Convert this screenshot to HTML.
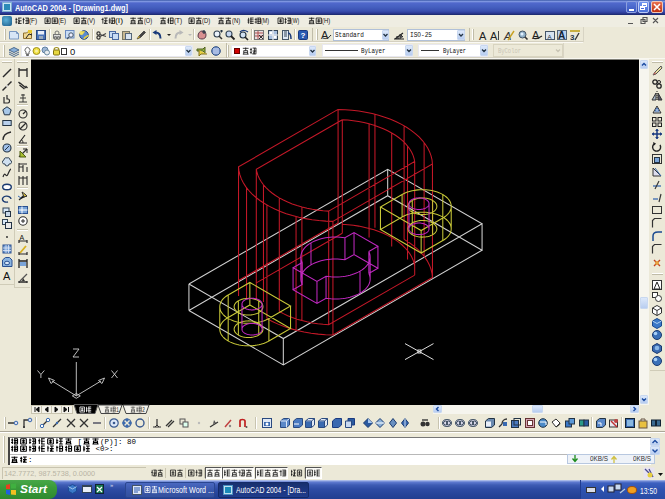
<!DOCTYPE html><html><head><meta charset="utf-8"><style>
*{margin:0;padding:0;box-sizing:border-box}
body{width:665px;height:499px;overflow:hidden;position:relative;background:#ece9d8;font-family:"Liberation Sans",sans-serif}
div{position:absolute}
.t{white-space:nowrap;line-height:1}
.cj svg{position:absolute;left:0;top:0}
svg{position:absolute;overflow:visible}
.grip{width:2px;border-left:1px solid #fff;border-right:1px solid #c0bca8}
.gripv{height:2px;border-top:1px solid #fff;border-bottom:1px solid #c0bca8}
.sep{width:2px;border-left:1px solid #c8c4b0;border-right:1px solid #fff}
.sepv{height:2px;border-top:1px solid #c8c4b0;border-bottom:1px solid #fff}
.dd{background:#fff;border:1px solid #b0c0d8}
.ddb{background:linear-gradient(#dce8fa,#b8cdf0);border:1px solid #c8d8f0;border-radius:1px}
</style></head><body>

<div style="left:0;top:0;width:665px;height:15px;background:linear-gradient(#3b5aa8 0,#7d95e0 1.5px,#5068cc 3px,#4560c0 7px,#3a4fb0 11px,#2c3a98 13px,#1a2868 15px)"></div>
<div style="left:2px;top:2px;width:10px;height:10px;background:#c8e4f4;border:1px solid #80b0d0"></div>
<div style="left:4px;top:4px;width:6px;height:6px;background:#2a8ab8"></div>
<div class="t" style="left:14.50px;top:3.70px;font-size:8.70px;color:#fff;font-family:'Liberation Sans',sans-serif;font-weight:bold;transform:scaleX(0.851);transform-origin:0 0;">AutoCAD&nbsp;2004&nbsp;-&nbsp;[Drawing1.dwg]</div>
<div style="left:626px;top:1px;width:11px;height:12px;background:linear-gradient(#5a78d8,#3a58c0);border:1px solid #8ca0e0;border-radius:2px"></div>
<div style="left:629px;top:9px;width:5px;height:2px;background:#fff"></div>
<div style="left:638px;top:1px;width:11px;height:12px;background:linear-gradient(#7094f0,#4a70d8);border:1px solid #b8c8f4;border-radius:2px"></div>
<div style="left:642px;top:3px;width:5px;height:4px;border:1px solid #fff;border-top-width:2px"></div>
<div style="left:640px;top:6px;width:5px;height:4px;border:1px solid #fff;border-top-width:2px;background:#4a68d8"></div>
<div style="left:651px;top:1px;width:12px;height:12px;background:linear-gradient(#e87050,#c03010);border:1px solid #f0c8b8;border-radius:2px"></div>
<svg style="left:651px;top:1px" width="12" height="12"><path d="M3 3L9 9M9 3L3 9" stroke="#fff" stroke-width="1.6"/></svg>
<div style="left:0;top:15px;width:665px;height:12px;background:#efede2"></div>
<div style="left:2px;top:16px;width:10px;height:10px;background:radial-gradient(circle at 40% 40%,#5ab0d8,#1a5a88);border-radius:2px"></div>
<svg style="left:0;top:0" width="665" height="499"><path d="M16.24 17.82V23.68M15.50 19.45H17.48M15.50 22.05H17.36M18.10 18.02H21.58M18.10 20.75H21.58M18.10 23.48H21.58M18.91 18.02V23.68M18.29 23.68L19.84 21.07M23.44 17.82V23.68M22.70 19.45H24.68M25.30 18.02H28.78M25.30 20.75H28.78M25.30 23.48H28.78M27.04 18.02V23.68M28.59 18.02V23.35" stroke="#111" stroke-width="0.8" fill="none" stroke-opacity="1.0"/></svg><div class="t" style="left:29.40px;top:16.72px;font-size:8.05px;color:#111;font-family:'Liberation Sans',sans-serif;transform:scaleX(0.788);transform-origin:0 0;opacity:1.0">(F)</div>
<svg style="left:0;top:0" width="665" height="499"><path d="M45.00 18.02H50.20M45.00 18.02V23.68M50.20 18.02V23.68M45.00 23.48H50.20M46.05 20.10H49.15M46.05 21.73H49.15M47.60 18.80V22.70M52.20 18.02H57.40M52.20 18.02V23.68M57.40 18.02V23.68M52.20 23.48H57.40M53.25 20.10H56.35M53.25 21.73H56.35M54.80 18.80V22.70" stroke="#111" stroke-width="0.8" fill="none" stroke-opacity="1.0"/></svg><div class="t" style="left:58.40px;top:16.72px;font-size:8.05px;color:#111;font-family:'Liberation Sans',sans-serif;transform:scaleX(0.755);transform-origin:0 0;opacity:1.0">(E)</div>
<svg style="left:0;top:0" width="665" height="499"><path d="M74.00 18.02H79.20M74.00 18.02V23.68M79.20 18.02V23.68M74.00 23.48H79.20M75.05 20.10H78.15M75.05 21.73H78.15M76.60 18.80V22.70M81.01 18.28H86.59M83.80 17.50V20.43M81.63 20.43H85.97M81.94 20.75V23.68M85.66 20.75V23.68M81.94 22.05H85.66M81.01 23.68H86.59" stroke="#111" stroke-width="0.8" fill="none" stroke-opacity="1.0"/></svg><div class="t" style="left:87.40px;top:16.72px;font-size:8.05px;color:#111;font-family:'Liberation Sans',sans-serif;transform:scaleX(0.755);transform-origin:0 0;opacity:1.0">(V)</div>
<svg style="left:0;top:0" width="665" height="499"><path d="M102.86 17.82V23.68M101.50 19.45H103.48M104.10 18.02H107.58M104.10 20.75H107.58M104.10 23.48H107.58M105.84 18.02V23.68M104.29 23.68L105.84 21.07M109.82 17.82V23.68M108.70 20.10H110.68M108.70 22.05H110.56M111.30 18.02H114.78M111.30 20.75H114.78M111.30 23.48H114.78M112.11 18.02V23.68M114.59 18.02V23.35M111.49 23.68L113.04 21.07" stroke="#111" stroke-width="0.8" fill="none" stroke-opacity="1.0"/></svg><div class="t" style="left:115.40px;top:16.72px;font-size:8.05px;color:#111;font-family:'Liberation Sans',sans-serif;transform:scaleX(1.066);transform-origin:0 0;opacity:1.0">(I)</div>
<svg style="left:0;top:0" width="665" height="499"><path d="M130.31 18.28H135.89M133.10 17.50V20.43M130.93 20.43H135.27M131.24 20.75V23.68M134.96 20.75V23.68M131.24 22.05H134.96M130.31 23.68H135.89M137.51 18.28H143.09M140.30 17.50V20.43M138.13 20.43H142.47M138.44 20.75V23.68M142.16 20.75V23.68M138.44 22.05H142.16M137.51 23.68H143.09" stroke="#111" stroke-width="0.8" fill="none" stroke-opacity="1.0"/></svg><div class="t" style="left:143.90px;top:16.72px;font-size:8.05px;color:#111;font-family:'Liberation Sans',sans-serif;transform:scaleX(0.697);transform-origin:0 0;opacity:1.0">(O)</div>
<svg style="left:0;top:0" width="665" height="499"><path d="M160.31 18.28H165.89M163.10 17.50V20.43M160.93 20.43H165.27M161.24 20.75V23.68M164.96 20.75V23.68M161.24 22.05H164.96M160.31 23.68H165.89M168.56 17.82V23.68M167.20 20.10H169.18M167.20 22.05H169.06M169.80 18.02H173.28M169.80 20.75H173.28M169.80 23.48H173.28M170.61 18.02V23.68M173.09 18.02V23.35" stroke="#111" stroke-width="0.8" fill="none" stroke-opacity="1.0"/></svg><div class="t" style="left:173.90px;top:16.72px;font-size:8.05px;color:#111;font-family:'Liberation Sans',sans-serif;transform:scaleX(0.788);transform-origin:0 0;opacity:1.0">(T)</div>
<svg style="left:0;top:0" width="665" height="499"><path d="M189.00 18.02H194.20M189.00 18.02V23.68M194.20 18.02V23.68M189.00 23.48H194.20M190.05 20.10H193.15M190.05 21.73H193.15M191.60 18.80V22.70M196.01 18.28H201.59M198.80 17.50V20.43M196.63 20.43H200.97M196.94 20.75V23.68M200.66 20.75V23.68M196.94 22.05H200.66M196.01 23.68H201.59" stroke="#111" stroke-width="0.8" fill="none" stroke-opacity="1.0"/></svg><div class="t" style="left:202.40px;top:16.72px;font-size:8.05px;color:#111;font-family:'Liberation Sans',sans-serif;transform:scaleX(0.725);transform-origin:0 0;opacity:1.0">(D)</div>
<svg style="left:0;top:0" width="665" height="499"><path d="M218.31 18.28H223.89M221.10 17.50V20.43M218.93 20.43H223.27M219.24 20.75V23.68M222.96 20.75V23.68M219.24 22.05H222.96M218.31 23.68H223.89M225.51 18.28H231.09M228.30 17.50V20.43M226.13 20.43H230.47M226.44 20.75V23.68M230.16 20.75V23.68M226.44 22.05H230.16M225.51 23.68H231.09" stroke="#111" stroke-width="0.8" fill="none" stroke-opacity="1.0"/></svg><div class="t" style="left:231.90px;top:16.72px;font-size:8.05px;color:#111;font-family:'Liberation Sans',sans-serif;transform:scaleX(0.725);transform-origin:0 0;opacity:1.0">(N)</div>
<svg style="left:0;top:0" width="665" height="499"><path d="M248.62 17.82V23.68M247.50 20.10H249.48M247.50 22.05H249.36M250.10 18.02H253.58M250.10 19.84H253.58M250.10 21.66H253.58M250.10 23.48H253.58M250.91 18.02V23.68M256.06 17.82V23.68M254.70 19.45H256.68M254.70 22.05H256.56M257.30 18.02H260.78M257.30 19.84H260.78M257.30 21.66H260.78M257.30 23.48H260.78M258.11 18.02V23.68M260.59 18.02V23.35" stroke="#111" stroke-width="0.8" fill="none" stroke-opacity="1.0"/></svg><div class="t" style="left:261.40px;top:16.72px;font-size:8.05px;color:#111;font-family:'Liberation Sans',sans-serif;transform:scaleX(0.671);transform-origin:0 0;opacity:1.0">(M)</div>
<svg style="left:0;top:0" width="665" height="499"><path d="M278.00 18.02H283.20M278.00 18.02V23.68M283.20 18.02V23.68M278.00 23.48H283.20M279.05 20.10H282.15M279.05 21.73H282.15M280.60 18.80V22.70M285.44 17.82V23.68M284.70 19.45H286.68M284.70 22.05H286.56M287.30 18.02H290.78M287.30 20.75H290.78M287.30 23.48H290.78M289.04 18.02V23.68M290.59 18.02V23.35" stroke="#111" stroke-width="0.8" fill="none" stroke-opacity="1.0"/></svg><div class="t" style="left:291.40px;top:16.72px;font-size:8.05px;color:#111;font-family:'Liberation Sans',sans-serif;transform:scaleX(0.625);transform-origin:0 0;opacity:1.0">(W)</div>
<svg style="left:0;top:0" width="665" height="499"><path d="M308.81 18.28H314.39M311.60 17.50V20.43M309.43 20.43H313.77M309.74 20.75V23.68M313.46 20.75V23.68M309.74 22.05H313.46M308.81 23.68H314.39M316.20 18.02H321.40M316.20 18.02V23.68M321.40 18.02V23.68M316.20 23.48H321.40M317.25 20.10H320.35M317.25 21.73H320.35M318.80 18.80V22.70" stroke="#111" stroke-width="0.8" fill="none" stroke-opacity="1.0"/></svg><div class="t" style="left:322.40px;top:16.72px;font-size:8.05px;color:#111;font-family:'Liberation Sans',sans-serif;transform:scaleX(0.725);transform-origin:0 0;opacity:1.0">(H)</div>
<svg style="left:0;top:15px" width="665" height="12"><path d="M628 8.5h5M643 2.5h4v4h-4zM641 4.5h4v4h-4zM653 3l5 5M658 3l-5 5" stroke="#555" stroke-width="1.1" fill="#efede2"/></svg>
<div style="left:0;top:27px;width:665px;height:32px;background:#ece9d8"></div>
<div style="left:0;top:41px;width:583px;height:1px;background:#d4d0c0"></div>
<div style="left:0;top:42px;width:583px;height:1px;background:#faf9f4"></div>
<div style="left:0;top:57px;width:563px;height:1px;background:#d4d0c0"></div>
<div style="left:0;top:58px;width:665px;height:1px;background:#f8f7f0"></div>
<div class="grip" style="left:4px;top:29px;height:11px"></div>
<svg style="left:9px;top:30px" width="10" height="10" viewBox="0 0 10 10"><path d="M0.5 1.5h7l2 2v5.5h-9z" fill="#d8e6f6" stroke="#7a98c0"/><path d="M7.5 1.5v2h2" fill="none" stroke="#7a98c0"/></svg>
<svg style="left:23px;top:30px" width="10" height="10" viewBox="0 0 10 10"><path d="M0.5 3h3l1-1h4v6.5h-8z" fill="#f0d890" stroke="#907030"/><path d="M3 8l3-4 3 1" stroke="#222" fill="none"/><rect x="5" y="0" width="4" height="3" fill="#e8c830"/></svg>
<svg style="left:36px;top:30px" width="10" height="10" viewBox="0 0 10 10"><rect x="0.5" y="0.5" width="9" height="9" fill="#4a74b8" stroke="#2a4a80"/><rect x="2" y="1" width="6" height="3.5" fill="#e8eef8"/><rect x="3" y="6" width="4" height="3" fill="#9ab"/></svg>
<svg style="left:52px;top:30px" width="10" height="10" viewBox="0 0 10 10"><circle cx="5" cy="3" r="2" fill="none" stroke="#777"/><rect x="1.5" y="4.5" width="7" height="3.5" fill="#ddd" stroke="#777"/><circle cx="3.5" cy="8" r="1.5" fill="none" stroke="#666"/><circle cx="6.5" cy="8" r="1.5" fill="none" stroke="#666"/></svg>
<svg style="left:65px;top:30px" width="10" height="10" viewBox="0 0 10 10"><rect x="0.5" y="0.5" width="8.5" height="7.5" fill="#c8dcf4" stroke="#6a8ac0"/><circle cx="6" cy="5" r="2.2" fill="#eef" stroke="#456"/><path d="M2 9l2-2" stroke="#456" stroke-width="1.3"/></svg>
<svg style="left:79px;top:30px" width="10" height="10" viewBox="0 0 10 10"><circle cx="5" cy="5" r="4.3" fill="#5a8ad0" stroke="#2a4a80"/><path d="M1 4c2-2 4 0 4-3M5 9c1-3 4-2 4-4" stroke="#e8d040" stroke-width="1.6" fill="none"/><circle cx="2.5" cy="3" r="2" fill="#f0e060"/></svg>
<svg style="left:96px;top:30px" width="10" height="10" viewBox="0 0 10 10"><circle cx="2.5" cy="3.5" r="1.6" fill="none" stroke="#333" stroke-width="1.2"/><circle cx="2.5" cy="7.5" r="1.6" fill="none" stroke="#333" stroke-width="1.2"/><path d="M4 4.5l6 2M4 6.5l6-3" stroke="#444" stroke-width="1.1"/></svg>
<svg style="left:109px;top:30px" width="10" height="10" viewBox="0 0 10 10"><rect x="0.5" y="1.5" width="6" height="6" fill="#c8dcf4" stroke="#4a6aa0"/><rect x="3.5" y="3.5" width="6" height="6" fill="#c8dcf4" stroke="#4a6aa0"/></svg>
<svg style="left:122px;top:30px" width="10" height="10" viewBox="0 0 10 10"><rect x="0.5" y="1.5" width="7" height="8" fill="#c8b890" stroke="#776"/><rect x="3.5" y="3.5" width="6" height="6" fill="#d8e4f0" stroke="#567"/></svg>
<svg style="left:136px;top:30px" width="10" height="10" viewBox="0 0 10 10"><path d="M1 9l2-3 5-5 1.5 1.5-5 5z" fill="#444" stroke="#222" stroke-width="0.6"/><path d="M1 9l2-3 1 1z" fill="#e8c030"/></svg>
<svg style="left:152px;top:30px" width="10" height="10" viewBox="0 0 10 10"><path d="M8.5 8.5c0-4-2-6-5-6" stroke="#1a3a7a" stroke-width="2" fill="none"/><path d="M0.5 2.5l4-2.5v5z" fill="#1a3a7a"/></svg>
<svg style="left:164px;top:30px" width="10" height="10" viewBox="0 0 10 10"><path d="M3 4h4l-2 2z" fill="#222"/></svg>
<svg style="left:174px;top:30px" width="10" height="10" viewBox="0 0 10 10"><path d="M1.5 8.5c0-4 2-6 5-6" stroke="#b8b8b8" stroke-width="2" fill="none"/><path d="M9.5 2.5l-4-2.5v5z" fill="#b8b8b8"/></svg>
<svg style="left:185px;top:30px" width="10" height="10" viewBox="0 0 10 10"><path d="M3 4h4l-2 2z" fill="#bbb"/></svg>
<svg style="left:197px;top:30px" width="10" height="10" viewBox="0 0 10 10"><path d="M1 6c0-3 2-5 4-5s4 1 4 4-2 4-4 4-4-1-4-3z" fill="#d89090" stroke="#5a3a4a"/><path d="M7 0v4M5 2h4" stroke="#234" stroke-width="1.2"/></svg>
<svg style="left:213px;top:30px" width="10" height="10" viewBox="0 0 10 10"><circle cx="4" cy="4" r="3" fill="#eaf2fa" stroke="#345" stroke-width="1.1"/><path d="M6 6l3 3" stroke="#333" stroke-width="1.5"/><path d="M7 1h3M8.5 0v2.5" stroke="#234"/></svg>
<svg style="left:225px;top:30px" width="10" height="10" viewBox="0 0 10 10"><circle cx="4" cy="4" r="3" fill="#c8d8f0" stroke="#345" stroke-width="1.1"/><path d="M6 6l3.5 3.5" stroke="#222" stroke-width="1.8"/></svg>
<svg style="left:239px;top:30px" width="10" height="10" viewBox="0 0 10 10"><circle cx="4" cy="5" r="3" fill="#d0e0f0" stroke="#234" stroke-width="1.1"/><path d="M6 7l3 3" stroke="#222" stroke-width="1.6"/><path d="M1 2c2-2 5-2 8 0" stroke="#1a3a7a" stroke-width="1.3" fill="none"/></svg>
<svg style="left:254px;top:30px" width="10" height="10" viewBox="0 0 10 10"><rect x="0.5" y="0.5" width="9" height="9" fill="#e8e0e0" stroke="#777"/><path d="M1 3h8M1 6h8M4 1v8" stroke="#b05050"/><path d="M5 5l4 4M9 5l-4 4" stroke="#333"/></svg>
<svg style="left:268px;top:30px" width="10" height="10" viewBox="0 0 10 10"><rect x="0.5" y="0.5" width="9" height="9" fill="#a8c0e0" stroke="#345"/><path d="M5 0v10M0 5h10" stroke="#eee" stroke-width="1.2"/><rect x="1.5" y="1.5" width="2.5" height="2.5" fill="#fff"/><rect x="6" y="6" width="2.5" height="2.5" fill="#fff"/></svg>
<svg style="left:282px;top:30px" width="10" height="10" viewBox="0 0 10 10"><rect x="0.5" y="0.5" width="6" height="9" fill="#dde8f4" stroke="#456"/><path d="M2 2h3M2 4h3M2 6h3" stroke="#345"/><path d="M6 3c3 0 3 3 3 6" stroke="#1a3a7a" stroke-width="1.5" fill="none"/></svg>
<svg style="left:298px;top:30px" width="10" height="10" viewBox="0 0 10 10"><rect x="0.5" y="0.5" width="9" height="9" rx="1" fill="#2a5ab0" stroke="#1a3a80"/><text x="5" y="8.3" font-size="8" font-weight="bold" text-anchor="middle" fill="#fff" font-family="Liberation Sans">?</text></svg>
<div class="sep" style="left:48.5px;top:29px;height:11px"></div>
<div class="sep" style="left:92px;top:29px;height:11px"></div>
<div class="sep" style="left:148.5px;top:29px;height:11px"></div>
<div class="sep" style="left:192.5px;top:29px;height:11px"></div>
<div class="sep" style="left:251px;top:29px;height:11px"></div>
<div class="sep" style="left:294px;top:29px;height:11px"></div>
<div style="left:312px;top:28px;width:1px;height:13px;background:#c0bca8"></div>
<div class="grip" style="left:316px;top:29px;height:11px"></div>
<svg style="left:321px;top:30px" width="10" height="10" viewBox="0 0 10 10"><text x="0" y="9" font-size="11" font-family="Liberation Sans" fill="#222">A</text><path d="M2 8c2 1 5 1 8-3" stroke="#222" fill="none"/></svg>
<div class="dd" style="left:333px;top:29px;width:56px;height:12px"></div>
<div class="t" style="left:335.00px;top:31.30px;font-size:7.97px;color:#111;font-family:'Liberation Mono',monospace;transform:scaleX(0.758);transform-origin:0 0;">Standard</div>
<div class="ddb" style="left:382px;top:30px;width:7px;height:10px"></div>
<svg style="left:382px;top:30px" width="7" height="10"><path d="M1.5 4l2 2 2-2" stroke="#234" stroke-width="1.3" fill="none"/></svg>
<svg style="left:394px;top:30px" width="10" height="10" viewBox="0 0 10 10"><path d="M0 9h10M1 9l8-6" stroke="#222" stroke-width="1.2"/><path d="M3 9v-3l2 3M6 9v-5l3 3" stroke="#333" fill="#555"/></svg>
<div class="dd" style="left:407px;top:29px;width:58px;height:12px"></div>
<div class="t" style="left:409.50px;top:31.30px;font-size:7.97px;color:#111;font-family:'Liberation Mono',monospace;transform:scaleX(0.766);transform-origin:0 0;">ISO-25</div>
<div class="ddb" style="left:457px;top:30px;width:8px;height:10px"></div>
<svg style="left:457px;top:30px" width="8" height="10"><path d="M2 4l2 2 2-2" stroke="#234" stroke-width="1.3" fill="none"/></svg>
<div style="left:469px;top:28px;width:1px;height:13px;background:#c0bca8"></div>
<div class="grip" style="left:472px;top:29px;height:11px"></div>
<svg style="left:478px;top:30px" width="10" height="10" viewBox="0 0 10 10"><text x="1" y="9.5" font-size="11" font-family="Liberation Sans" fill="#222">A</text></svg>
<svg style="left:490px;top:30px" width="10" height="10" viewBox="0 0 10 10"><text x="0" y="9.5" font-size="11" font-family="Liberation Sans" fill="#222">A</text><path d="M8.5 1v9" stroke="#444"/></svg>
<svg style="left:504px;top:30px" width="10" height="10" viewBox="0 0 10 10"><text x="0" y="9.5" font-size="11" font-style="italic" font-family="Liberation Sans" fill="#333">A</text><path d="M4 10l6-9" stroke="#c8a020" stroke-width="1.4"/></svg>
<svg style="left:518px;top:30px" width="10" height="10" viewBox="0 0 10 10"><circle cx="4.5" cy="4.5" r="3.5" fill="#90b0c8" stroke="#456"/><circle cx="4" cy="4" r="1.5" fill="#e0f0ff"/><path d="M7 7l2.5 2.5" stroke="#333" stroke-width="1.6"/></svg>
<svg style="left:532px;top:30px" width="10" height="10" viewBox="0 0 10 10"><text x="0" y="9" font-size="11" font-family="Liberation Sans" fill="#222">A</text><path d="M1 8c3 2 6 0 9-2" stroke="#222" stroke-width="1.2" fill="none"/></svg>
<svg style="left:545px;top:30px" width="10" height="10" viewBox="0 0 10 10"><rect x="0.5" y="1.5" width="9" height="8" fill="#d8e4f0" stroke="#456"/><text x="2.5" y="8.5" font-size="6" font-family="Liberation Sans" fill="#234">A</text></svg>
<svg style="left:557px;top:30px" width="10" height="10" viewBox="0 0 10 10"><rect x="0.5" y="0.5" width="9" height="9" fill="#b8d0f0" stroke="#567"/><text x="1" y="9" font-size="10" font-weight="bold" font-family="Liberation Sans" fill="#123">A</text></svg>
<svg style="left:570px;top:30px" width="10" height="10" viewBox="0 0 10 10"><rect x="0" y="0" width="10" height="2" fill="#c8b040"/><text x="0" y="10" font-size="8" font-weight="bold" font-family="Liberation Sans" fill="#234">3</text><path d="M5 10l4-7" stroke="#333" stroke-width="1.3"/></svg>
<div style="left:583px;top:27px;width:1px;height:15px;background:#d8d4c4"></div>
<div class="grip" style="left:3px;top:45px;height:12px"></div>
<svg style="left:9px;top:46px" width="10" height="10" viewBox="0 0 10 10"><path d="M0 4l5-2.5 5 2.5-5 2.5z" fill="#8ab0d8" stroke="#4a6a90"/><path d="M0 6l5 2.5 5-2.5M0 8l5 2.5 5-2.5" fill="none" stroke="#4a6a90"/></svg>
<div class="dd" style="left:21px;top:45px;width:172px;height:12px;border-color:#e8e8f0"></div>
<svg style="left:23px;top:46px" width="55" height="10"><path d="M3 6a2.5 2.5 0 1 1 3 0v2h-3z" fill="#fff" stroke="#666"/><rect x="3.2" y="8" width="2.6" height="2" fill="#666"/><circle cx="13.5" cy="5" r="3.5" fill="#f0e040" stroke="#a09020"/><circle cx="13.5" cy="5" r="1.5" fill="#f8f0a0"/><circle cx="22" cy="4" r="3" fill="#a0b8d8" stroke="#6080a0"/><circle cx="24" cy="6.5" r="2.5" fill="#e8ecf0" stroke="#6a8aa0"/><path d="M31 4a2.5 2.5 0 0 1 5 0" fill="none" stroke="#a09020" stroke-width="1.2"/><rect x="30.5" y="4" width="6" height="5" rx="1" fill="#e8d840" stroke="#807010"/><rect x="38.5" y="2.5" width="5" height="6" fill="#fff" stroke="#333"/></svg>
<div class="t" style="left:70.00px;top:46.59px;font-size:9.42px;color:#111;font-family:'Liberation Sans',sans-serif;">0</div>
<div class="ddb" style="left:185px;top:46px;width:7px;height:10px"></div>
<svg style="left:185px;top:46px" width="7" height="10"><path d="M1.5 4l2 2 2-2" stroke="#234" stroke-width="1.3" fill="none"/></svg>
<svg style="left:197px;top:46px" width="10" height="10" viewBox="0 0 10 10"><path d="M0 3h6l2-2v6l-2-2h-6z" fill="#90b040" stroke="#506020"/><path d="M10 8h-6l-2 2v-6" fill="#e8d040" stroke="#807020"/></svg>
<svg style="left:211px;top:46px" width="10" height="10" viewBox="0 0 10 10"><circle cx="5" cy="5" r="4.3" fill="#7a9ad0" stroke="#2a4a80"/><path d="M2 3h6M2 5h6M2 7h6" stroke="#eef" stroke-width="0.8"/></svg>
<div style="left:226px;top:43px;width:1px;height:15px;background:#c0bca8"></div>
<div class="grip" style="left:227px;top:45px;height:12px"></div>
<div class="dd" style="left:231px;top:45px;width:85px;height:12px;border-color:#e8e8f0"></div>
<div style="left:234px;top:48px;width:6px;height:6px;background:#d00000;border:1px solid #600"></div>
<svg style="left:0;top:0" width="665" height="499"><path d="M242.82 48.34H248.58M245.70 47.50V50.65M243.46 50.65H247.94M243.78 51.00V54.15M247.62 51.00V54.15M243.78 52.40H247.62M242.82 54.15H248.58M251.05 47.85V54.15M249.90 49.60H251.95M249.90 52.40H251.82M252.59 48.06H256.17M252.59 51.00H256.17M252.59 53.94H256.17M254.38 48.06V54.15M255.98 48.06V53.80M252.78 54.15L254.38 51.35" stroke="#111" stroke-width="0.8" fill="none" stroke-opacity="1.0"/></svg>
<div class="ddb" style="left:309px;top:46px;width:7px;height:10px"></div>
<svg style="left:309px;top:46px" width="7" height="10"><path d="M1.5 4l2 2 2-2" stroke="#234" stroke-width="1.3" fill="none"/></svg>
<div class="dd" style="left:322px;top:44px;width:91px;height:13px;border-color:#e8e8f0"></div>
<div style="left:325px;top:50px;width:33px;height:1px;background:#333"></div>
<div class="t" style="left:360.50px;top:46.80px;font-size:7.97px;color:#111;font-family:'Liberation Mono',monospace;transform:scaleX(0.732);transform-origin:0 0;">ByLayer</div>
<div class="ddb" style="left:405px;top:45px;width:8px;height:11px"></div>
<svg style="left:405px;top:45px" width="8" height="11"><path d="M2 4.5l2 2 2-2" stroke="#234" stroke-width="1.3" fill="none"/></svg>
<div class="dd" style="left:418px;top:44px;width:70px;height:13px;border-color:#e8e8f0"></div>
<div style="left:421px;top:50px;width:18px;height:1px;background:#333"></div>
<div class="t" style="left:443.00px;top:46.80px;font-size:7.97px;color:#111;font-family:'Liberation Mono',monospace;transform:scaleX(0.687);transform-origin:0 0;">ByLayer</div>
<div class="ddb" style="left:480px;top:45px;width:8px;height:11px"></div>
<svg style="left:480px;top:45px" width="8" height="11"><path d="M2 4.5l2 2 2-2" stroke="#234" stroke-width="1.3" fill="none"/></svg>
<div style="left:493px;top:44px;width:70px;height:13px;border:1px solid #d8d4c0;background:#ece9d8"></div>
<div class="t" style="left:497.50px;top:46.80px;font-size:7.97px;color:#c8c4b4;font-family:'Liberation Mono',monospace;transform:scaleX(0.687);transform-origin:0 0;">ByColor</div>
<svg style="left:554px;top:45px" width="8" height="11"><path d="M2 4.5l2 2 2-2" stroke="#c8c4b4" stroke-width="1.3" fill="none"/></svg>
<div style="left:563px;top:43px;width:1px;height:15px;background:#d8d4c4"></div>
<div style="left:31px;top:59px;width:608px;height:1px;background:#808078"></div>
<div style="left:31px;top:60px;width:608px;height:345px;background:#000"></div>
<svg style="left:0;top:0" width="665" height="499" viewBox="0 0 665 499">
<path d="M188.93 284.02 L387.68 169.28 L482.07 223.78 L283.32 338.52 L188.93 284.02 M188.93 310.43 L387.68 195.68 L482.07 250.18 L283.32 364.93 L188.93 310.43 M188.93 284.02 L188.93 310.43 M387.68 169.28 L387.68 195.68 M482.07 223.78 L482.07 250.18 M283.32 338.52 L283.32 364.93" fill="none" stroke="#d0d0d0" stroke-opacity="1" stroke-width="1.05"/>
<path d="M338.07 109.42 L345.06 109.67 L352.01 110.21 L358.87 111.05 L365.61 112.16 L372.19 113.56 L378.57 115.22 L384.74 117.15 L390.64 119.33 L396.26 121.75 L401.56 124.40 L406.52 127.26 L411.11 130.32 L415.30 133.56 L419.07 136.97 L422.41 140.53 L425.29 144.22 L427.71 148.02 L429.64 151.91 L431.08 155.87 L432.02 159.88 L432.46 163.92 L332.93 221.38 M332.93 221.38 L325.94 221.13 L318.99 220.59 L312.13 219.75 L305.39 218.64 L298.81 217.24 L292.43 215.58 L286.26 213.65 L280.36 211.47 L274.74 209.05 L269.44 206.40 L264.48 203.54 L259.89 200.48 L255.70 197.24 L251.93 193.83 L248.59 190.27 L245.71 186.58 L243.29 182.78 L241.36 178.89 L239.92 174.93 L238.98 170.92 L238.54 166.88 L338.07 109.42 M342.30 119.68 L347.82 120.06 L353.28 120.67 L358.65 121.50 L363.91 122.54 L369.03 123.79 L373.99 125.25 L378.76 126.90 L383.31 128.74 L387.64 130.76 L391.70 132.95 L395.50 135.30 L398.99 137.79 L402.18 140.43 L405.04 143.18 L407.56 146.04 L409.73 149.00 L411.54 152.03 L412.97 155.14 L414.02 158.29 L414.69 161.48 L328.70 211.12 M328.70 211.12 L323.18 210.74 L317.72 210.13 L312.35 209.30 L307.09 208.26 L301.97 207.01 L297.01 205.55 L292.24 203.90 L287.69 202.06 L283.36 200.04 L279.30 197.85 L275.50 195.50 L272.01 193.01 L268.82 190.37 L265.96 187.62 L263.44 184.76 L261.27 181.80 L259.46 178.77 L258.03 175.66 L256.98 172.51 L256.31 169.32 L342.30 119.68 M404.09 239.40 L409.09 242.52 L413.67 245.84 L417.80 249.36 L421.45 253.05 L424.61 256.89 L427.26 260.85 L429.38 264.92 L430.96 269.07 L431.99 273.28 L432.46 277.52 L332.93 334.98 L325.59 334.71 L318.30 334.12 L311.11 333.20 L304.06 331.98 L297.20 330.45 L290.55 328.63 L284.16 326.52 L278.07 324.13 L272.31 321.49 L266.91 318.60 M238.54 280.48 L338.07 223.02 M414.69 275.08 L328.70 324.72 L323.18 324.34 L317.72 323.73 L312.35 322.90 L307.09 321.86 L301.97 320.61 L297.01 319.15 L292.24 317.50 L287.69 315.66 L283.36 313.64 L279.30 311.45 M256.31 282.92 L342.30 233.28 M342.43 224.28 L347.93 224.67 L353.38 225.28 L358.74 226.11 L363.98 227.16 L369.09 228.41 L374.03 229.86 L378.79 231.51 L383.33 233.35 L387.65 235.37 L391.70 237.55 L395.49 239.89 L398.98 242.38 L402.16 245.01 L405.02 247.75 L407.54 250.61 L409.70 253.55 L411.51 256.58 L412.95 259.68 L414.01 262.82 L414.68 266.00 M432.46 277.52 L432.46 163.92 M338.07 223.02 L338.07 109.42 M332.93 334.98 L332.93 221.38 M404.09 239.40 L404.09 125.80 M266.91 318.60 L266.91 205.00 M424.11 256.22 L424.11 142.62 M374.95 227.84 L374.95 114.24 M296.05 330.16 L296.05 216.56 M414.69 275.08 L414.69 161.48 M342.30 233.28 L342.30 119.68 M328.70 324.72 L328.70 211.12 M391.70 246.55 L391.70 132.95 M279.30 311.45 L279.30 197.85 M407.54 259.61 L407.54 146.01 M369.09 237.41 L369.09 123.81 M301.91 320.59 L301.91 206.99 M238.54 166.88 L238.54 296.00 M246.55 187.73 L246.55 298.00 M256.31 169.32 L256.31 300.00 M263.46 184.79 L263.46 302.00" fill="none" stroke="#c41828" stroke-opacity="1" stroke-width="1.05"/>
<path d="M268.90 318.45 L267.44 319.24 L265.87 319.97 L264.23 320.64 L262.51 321.23 L260.72 321.76 L258.87 322.21 L256.97 322.59 L255.03 322.89 L253.06 323.11 L251.06 323.25 L249.06 323.31 L247.05 323.29 L245.05 323.19 L243.06 323.01 L241.10 322.75 L239.18 322.41 L237.31 322.00 L235.49 321.51 L233.73 320.94 L232.05 320.31 L230.44 319.61 L228.93 318.85 L227.50 318.03 L226.19 317.16 L224.98 316.23 L223.88 315.26 L222.91 314.24 L222.06 313.19 L221.34 312.11 L220.75 311.00 L220.30 309.87 L219.99 308.73 L219.81 307.57 L219.78 306.41 L219.88 305.25 L220.13 304.10 L220.51 302.96 L221.03 301.84 L221.68 300.74 L222.47 299.68 L223.38 298.64 L224.42 297.65 L225.57 296.70 L226.83 295.80 L228.20 294.95 L249.85 282.45 L290.55 305.95 L268.90 318.45 M268.90 340.95 L267.44 341.74 L265.87 342.47 L264.23 343.14 L262.51 343.73 L260.72 344.26 L258.87 344.71 L256.97 345.09 L255.03 345.39 L253.06 345.61 L251.06 345.75 L249.06 345.81 L247.05 345.79 L245.05 345.69 L243.06 345.51 L241.10 345.25 L239.18 344.91 L237.31 344.50 L235.49 344.01 L233.73 343.44 L232.05 342.81 L230.44 342.11 L228.93 341.35 L227.50 340.53 L226.19 339.66 L224.98 338.73 L223.88 337.76 L222.91 336.74 L222.06 335.69 L221.34 334.61 L220.75 333.50 L220.30 332.37 L219.99 331.23 L219.81 330.07 L219.78 328.91 L219.88 327.75 L220.13 326.60 L220.51 325.46 L221.03 324.34 L221.68 323.24 L222.47 322.18 L223.38 321.14 L224.42 320.15 L225.57 319.20 L226.83 318.30 L228.20 317.45 L249.85 304.95 L290.55 328.45 L268.90 340.95 M249.85 282.45 L249.85 304.95 M290.55 305.95 L290.55 328.45 M268.90 318.45 L268.90 340.95 M228.20 294.95 L228.20 317.45 M219.77 306.70 L219.77 329.20 M228.20 318.45 L228.20 340.95 M258.74 300.82 L259.42 301.24 L260.06 301.70 L260.63 302.17 L261.15 302.67 L261.61 303.19 L262.00 303.72 L262.33 304.27 L262.59 304.83 L262.78 305.40 L262.90 305.98 L262.95 306.55 L262.94 307.14 L262.85 307.71 L262.69 308.29 L262.47 308.85 L262.17 309.41 L261.81 309.95 L261.39 310.48 L260.90 310.98 L260.35 311.47 L259.75 311.93 L259.09 312.37 L258.38 312.78 L257.62 313.16 L256.81 313.51 L255.97 313.83 L255.09 314.11 L254.18 314.35 L253.24 314.56 L252.28 314.73 L251.30 314.86 L250.31 314.95 L249.31 315.00 L248.30 315.01 L247.30 314.98 L246.30 314.91 L245.31 314.80 L244.34 314.65 L243.39 314.46 L242.47 314.24 L241.57 313.97 L240.71 313.67 L239.89 313.34 L239.10 312.98 L238.37 312.58 L237.68 312.16 L237.05 311.70 L236.47 311.23 L235.96 310.73 L235.50 310.21 L235.11 309.68 L234.78 309.13 L234.52 308.57 L234.33 308.00 L234.21 307.42 L234.15 306.85 L234.17 306.26 L234.26 305.69 L234.42 305.11 L234.64 304.55 L234.94 303.99 L235.30 303.45 L235.72 302.92 L236.21 302.42 L236.76 301.93 L237.36 301.47 L238.02 301.03 L238.73 300.62 L239.49 300.24 L240.29 299.89 L241.14 299.57 L242.01 299.29 L242.93 299.05 L243.86 298.84 L244.83 298.67 L245.81 298.54 L246.80 298.45 L247.80 298.40 L248.80 298.39 L249.81 298.42 L250.81 298.49 L251.79 298.60 L252.76 298.75 L253.72 298.94 L254.64 299.16 L255.54 299.43 L256.40 299.73 L257.22 300.06 L258.00 300.42 L258.74 300.82 M258.74 323.32 L259.42 323.74 L260.06 324.20 L260.63 324.67 L261.15 325.17 L261.61 325.69 L262.00 326.22 L262.33 326.77 L262.59 327.33 L262.78 327.90 L262.90 328.48 L262.95 329.05 L262.94 329.64 L262.85 330.21 L262.69 330.79 L262.47 331.35 L262.17 331.91 L261.81 332.45 L261.39 332.98 L260.90 333.48 L260.35 333.97 L259.75 334.43 L259.09 334.87 L258.38 335.28 L257.62 335.66 L256.81 336.01 L255.97 336.33 L255.09 336.61 L254.18 336.85 L253.24 337.06 L252.28 337.23 L251.30 337.36 L250.31 337.45 L249.31 337.50 L248.30 337.51 L247.30 337.48 L246.30 337.41 L245.31 337.30 L244.34 337.15 L243.39 336.96 L242.47 336.74 L241.57 336.47 L240.71 336.17 L239.89 335.84 L239.10 335.48 L238.37 335.08 L237.68 334.66 L237.05 334.20 L236.47 333.73 L235.96 333.23 L235.50 332.71 L235.11 332.18 L234.78 331.63 L234.52 331.07 L234.33 330.50 L234.21 329.92 L234.15 329.35 L234.17 328.76 L234.26 328.19 L234.42 327.61 L234.64 327.05 L234.94 326.49 L235.30 325.95 L235.72 325.42 L236.21 324.92 L236.76 324.43 L237.36 323.97 L238.02 323.53 L238.73 323.12 L239.49 322.74 L240.29 322.39 L241.14 322.07 L242.01 321.79 L242.93 321.55 L243.86 321.34 L244.83 321.17 L245.81 321.04 L246.80 320.95 L247.80 320.90 L248.80 320.89 L249.81 320.92 L250.81 320.99 L251.79 321.10 L252.76 321.25 L253.72 321.44 L254.64 321.66 L255.54 321.93 L256.40 322.23 L257.22 322.56 L258.00 322.92 L258.74 323.32 M258.74 300.82 L258.74 323.32 M258.74 312.58 L258.74 335.08 M238.37 312.58 L238.37 335.08 M238.37 300.82 L238.37 323.32 M402.10 194.55 L403.56 193.76 L405.13 193.03 L406.77 192.36 L408.49 191.77 L410.28 191.24 L412.13 190.79 L414.03 190.41 L415.97 190.11 L417.94 189.89 L419.94 189.75 L421.94 189.69 L423.95 189.71 L425.95 189.81 L427.94 189.99 L429.90 190.25 L431.82 190.59 L433.69 191.00 L435.51 191.49 L437.27 192.06 L438.95 192.69 L440.56 193.39 L442.07 194.15 L443.50 194.97 L444.81 195.84 L446.02 196.77 L447.12 197.74 L448.09 198.76 L448.94 199.81 L449.66 200.89 L450.25 202.00 L450.70 203.13 L451.01 204.27 L451.19 205.43 L451.22 206.59 L451.12 207.75 L450.87 208.90 L450.49 210.04 L449.97 211.16 L449.32 212.26 L448.53 213.32 L447.62 214.36 L446.58 215.35 L445.43 216.30 L444.17 217.20 L442.80 218.05 L421.15 230.55 L380.45 207.05 L402.10 194.55 M402.10 217.05 L403.56 216.26 L405.13 215.53 L406.77 214.86 L408.49 214.27 L410.28 213.74 L412.13 213.29 L414.03 212.91 L415.97 212.61 L417.94 212.39 L419.94 212.25 L421.94 212.19 L423.95 212.21 L425.95 212.31 L427.94 212.49 L429.90 212.75 L431.82 213.09 L433.69 213.50 L435.51 213.99 L437.27 214.56 L438.95 215.19 L440.56 215.89 L442.07 216.65 L443.50 217.47 L444.81 218.34 L446.02 219.27 L447.12 220.24 L448.09 221.26 L448.94 222.31 L449.66 223.39 L450.25 224.50 L450.70 225.63 L451.01 226.77 L451.19 227.93 L451.22 229.09 L451.12 230.25 L450.87 231.40 L450.49 232.54 L449.97 233.66 L449.32 234.76 L448.53 235.82 L447.62 236.86 L446.58 237.85 L445.43 238.80 L444.17 239.70 L442.80 240.55 L421.15 253.05 L380.45 229.55 L402.10 217.05 M380.45 207.05 L380.45 229.55 M421.15 230.55 L421.15 253.05 M442.80 218.05 L442.80 240.55 M402.10 194.55 L402.10 217.05 M451.23 206.30 L451.23 228.80 M442.80 194.55 L442.80 217.05 M432.63 200.42 L433.32 200.84 L433.95 201.30 L434.53 201.77 L435.04 202.27 L435.50 202.79 L435.89 203.32 L436.22 203.87 L436.48 204.43 L436.67 205.00 L436.79 205.58 L436.85 206.15 L436.83 206.74 L436.74 207.31 L436.58 207.89 L436.36 208.45 L436.06 209.01 L435.70 209.55 L435.28 210.08 L434.79 210.58 L434.24 211.07 L433.64 211.53 L432.98 211.97 L432.27 212.38 L431.51 212.76 L430.71 213.11 L429.86 213.43 L428.99 213.71 L428.07 213.95 L427.14 214.16 L426.17 214.33 L425.19 214.46 L424.20 214.55 L423.20 214.60 L422.20 214.61 L421.19 214.58 L420.19 214.51 L419.21 214.40 L418.24 214.25 L417.28 214.06 L416.36 213.84 L415.46 213.57 L414.60 213.27 L413.78 212.94 L413.00 212.58 L412.26 212.18 L411.58 211.76 L410.94 211.30 L410.37 210.83 L409.85 210.33 L409.39 209.81 L409.00 209.28 L408.67 208.73 L408.41 208.17 L408.22 207.60 L408.10 207.02 L408.05 206.45 L408.06 205.86 L408.15 205.29 L408.31 204.71 L408.53 204.15 L408.83 203.59 L409.19 203.05 L409.61 202.52 L410.10 202.02 L410.65 201.53 L411.25 201.07 L411.91 200.63 L412.62 200.22 L413.38 199.84 L414.19 199.49 L415.03 199.17 L415.91 198.89 L416.82 198.65 L417.76 198.44 L418.72 198.27 L419.70 198.14 L420.69 198.05 L421.69 198.00 L422.70 197.99 L423.70 198.02 L424.70 198.09 L425.69 198.20 L426.66 198.35 L427.61 198.54 L428.53 198.76 L429.43 199.03 L430.29 199.33 L431.11 199.66 L431.90 200.02 L432.63 200.42 M432.63 222.92 L433.32 223.34 L433.95 223.80 L434.53 224.27 L435.04 224.77 L435.50 225.29 L435.89 225.82 L436.22 226.37 L436.48 226.93 L436.67 227.50 L436.79 228.08 L436.85 228.65 L436.83 229.24 L436.74 229.81 L436.58 230.39 L436.36 230.95 L436.06 231.51 L435.70 232.05 L435.28 232.58 L434.79 233.08 L434.24 233.57 L433.64 234.03 L432.98 234.47 L432.27 234.88 L431.51 235.26 L430.71 235.61 L429.86 235.93 L428.99 236.21 L428.07 236.45 L427.14 236.66 L426.17 236.83 L425.19 236.96 L424.20 237.05 L423.20 237.10 L422.20 237.11 L421.19 237.08 L420.19 237.01 L419.21 236.90 L418.24 236.75 L417.28 236.56 L416.36 236.34 L415.46 236.07 L414.60 235.77 L413.78 235.44 L413.00 235.08 L412.26 234.68 L411.58 234.26 L410.94 233.80 L410.37 233.33 L409.85 232.83 L409.39 232.31 L409.00 231.78 L408.67 231.23 L408.41 230.67 L408.22 230.10 L408.10 229.52 L408.05 228.95 L408.06 228.36 L408.15 227.79 L408.31 227.21 L408.53 226.65 L408.83 226.09 L409.19 225.55 L409.61 225.02 L410.10 224.52 L410.65 224.03 L411.25 223.57 L411.91 223.13 L412.62 222.72 L413.38 222.34 L414.19 221.99 L415.03 221.67 L415.91 221.39 L416.82 221.15 L417.76 220.94 L418.72 220.77 L419.70 220.64 L420.69 220.55 L421.69 220.50 L422.70 220.49 L423.70 220.52 L424.70 220.59 L425.69 220.70 L426.66 220.85 L427.61 221.04 L428.53 221.26 L429.43 221.53 L430.29 221.83 L431.11 222.16 L431.90 222.52 L432.63 222.92 M432.63 200.42 L432.63 222.92 M432.63 212.18 L432.63 234.68 M412.26 212.18 L412.26 234.68 M412.26 200.42 L412.26 222.92" fill="none" stroke="#c8c838" stroke-opacity="1" stroke-width="1.05"/>
<path d="M368.85 251.55 L369.43 252.92 L369.85 254.32 L370.09 255.73 L370.16 257.14 L370.05 258.55 L369.78 259.96 L369.33 261.35 L368.71 262.72 L367.93 264.06 L366.98 265.37 L365.88 266.64 L364.62 267.85 L363.22 269.01 L361.68 270.11 L360.01 271.15 L358.21 272.12 L356.31 273.00 L354.29 273.81 L352.19 274.54 L350.00 275.18 L347.74 275.72 L345.41 276.18 L343.04 276.53 L340.63 276.79 L338.19 276.95 L335.74 277.01 L333.29 276.97 L330.85 276.83 L328.44 276.59 L326.05 276.25 L316.97 281.50 L293.07 267.70 L302.15 262.45 L301.57 261.08 L301.15 259.68 L300.91 258.27 L300.84 256.86 L300.95 255.45 L301.22 254.04 L301.67 252.65 L302.29 251.28 L303.07 249.94 L304.02 248.63 L305.12 247.36 L306.38 246.15 L307.78 244.99 L309.32 243.89 L310.99 242.85 L312.79 241.88 L314.69 241.00 L316.71 240.19 L318.81 239.46 L321.00 238.82 L323.26 238.28 L325.59 237.82 L327.96 237.47 L330.37 237.21 L332.81 237.05 L335.26 236.99 L337.71 237.03 L340.15 237.17 L342.56 237.41 L344.95 237.75 L354.03 232.50 L377.93 246.30 L368.85 251.55 M368.85 273.55 L369.43 274.92 L369.85 276.32 L370.09 277.73 L370.16 279.14 L370.05 280.55 L369.78 281.96 L369.33 283.35 L368.71 284.72 L367.93 286.06 L366.98 287.37 L365.88 288.64 L364.62 289.85 L363.22 291.01 L361.68 292.11 L360.01 293.15 L358.21 294.12 L356.31 295.00 L354.29 295.81 L352.19 296.54 L350.00 297.18 L347.74 297.72 L345.41 298.18 L343.04 298.53 L340.63 298.79 L338.19 298.95 L335.74 299.01 L333.29 298.97 L330.85 298.83 L328.44 298.59 L326.05 298.25 L316.97 303.50 L293.07 289.70 L302.15 284.45 L301.57 283.08 L301.15 281.68 L300.91 280.27 L300.84 278.86 L300.95 277.45 L301.22 276.04 L301.67 274.65 L302.29 273.28 L303.07 271.94 L304.02 270.63 L305.12 269.36 L306.38 268.15 L307.78 266.99 L309.32 265.89 L310.99 264.85 L312.79 263.88 L314.69 263.00 L316.71 262.19 L318.81 261.46 L321.00 260.82 L323.26 260.28 L325.59 259.82 L327.96 259.47 L330.37 259.21 L332.81 259.05 L335.26 258.99 L337.71 259.03 L340.15 259.17 L342.56 259.41 L344.95 259.75 L354.03 254.50 L377.93 268.30 L368.85 273.55 M316.97 281.50 L316.97 303.50 M293.07 267.70 L293.07 289.70 M377.93 246.30 L377.93 268.30 M354.03 232.50 L354.03 254.50 M368.85 251.55 L368.85 273.55 M344.95 237.75 L344.95 259.75 M326.05 276.25 L326.05 298.25 M302.15 262.45 L302.15 284.45 M370.16 279.00 L370.16 257.00 M300.84 279.00 L300.84 257.00 M360.01 293.15 L360.01 271.15 M310.99 264.85 L310.99 242.85 M259.12 300.00 L259.60 300.30 L260.04 300.61 L260.44 300.94 L260.80 301.29 L261.12 301.65 L261.39 302.02 L261.62 302.40 L261.80 302.80 L261.94 303.19 L262.02 303.59 L262.06 304.00 L262.05 304.40 L261.99 304.81 L261.88 305.21 L261.72 305.60 L261.51 305.99 L261.26 306.37 L260.97 306.73 L260.63 307.09 L260.24 307.43 L259.82 307.75 L259.36 308.05 L258.87 308.34 L258.34 308.61 L257.78 308.85 L257.19 309.07 L256.58 309.27 L255.94 309.44 L255.29 309.58 L254.62 309.70 L253.93 309.79 L253.24 309.86 L252.54 309.89 L251.84 309.90 L251.14 309.88 L250.45 309.83 L249.76 309.75 L249.08 309.64 L248.42 309.51 L247.77 309.36 L247.15 309.17 L246.55 308.96 L245.97 308.73 L245.43 308.48 L244.92 308.20 L244.44 307.90 L244.00 307.59 L243.60 307.26 L243.23 306.91 L242.92 306.55 L242.64 306.18 L242.41 305.80 L242.23 305.40 L242.10 305.01 L242.01 304.61 L241.98 304.20 L241.99 303.80 L242.05 303.39 L242.16 302.99 L242.32 302.60 L242.52 302.21 L242.77 301.83 L243.07 301.47 L243.41 301.11 L243.79 300.77 L244.21 300.45 L244.67 300.15 L245.17 299.86 L245.70 299.59 L246.26 299.35 L246.85 299.13 L247.46 298.93 L248.09 298.76 L248.75 298.62 L249.42 298.50 L250.10 298.41 L250.79 298.34 L251.49 298.31 L252.19 298.30 L252.89 298.32 L253.59 298.37 L254.28 298.45 L254.95 298.56 L255.62 298.69 L256.26 298.84 L256.89 299.03 L257.49 299.24 L258.06 299.47 L258.61 299.72 L259.12 300.00 M259.12 325.10 L259.60 325.40 L260.04 325.71 L260.44 326.04 L260.80 326.39 L261.12 326.75 L261.39 327.12 L261.62 327.50 L261.80 327.90 L261.94 328.29 L262.02 328.69 L262.06 329.10 L262.05 329.50 L261.99 329.91 L261.88 330.31 L261.72 330.70 L261.51 331.09 L261.26 331.47 L260.97 331.83 L260.63 332.19 L260.24 332.53 L259.82 332.85 L259.36 333.15 L258.87 333.44 L258.34 333.71 L257.78 333.95 L257.19 334.17 L256.58 334.37 L255.94 334.54 L255.29 334.68 L254.62 334.80 L253.93 334.89 L253.24 334.96 L252.54 334.99 L251.84 335.00 L251.14 334.98 L250.45 334.93 L249.76 334.85 L249.08 334.74 L248.42 334.61 L247.77 334.46 L247.15 334.27 L246.55 334.06 L245.97 333.83 L245.43 333.58 L244.92 333.30 L244.44 333.00 L244.00 332.69 L243.60 332.36 L243.23 332.01 L242.92 331.65 L242.64 331.28 L242.41 330.90 L242.23 330.50 L242.10 330.11 L242.01 329.71 L241.98 329.30 L241.99 328.90 L242.05 328.49 L242.16 328.09 L242.32 327.70 L242.52 327.31 L242.77 326.93 L243.07 326.57 L243.41 326.21 L243.79 325.87 L244.21 325.55 L244.67 325.25 L245.17 324.96 L245.70 324.69 L246.26 324.45 L246.85 324.23 L247.46 324.03 L248.09 323.86 L248.75 323.72 L249.42 323.60 L250.10 323.51 L250.79 323.44 L251.49 323.41 L252.19 323.40 L252.89 323.42 L253.59 323.47 L254.28 323.55 L254.95 323.66 L255.62 323.79 L256.26 323.94 L256.89 324.13 L257.49 324.34 L258.06 324.57 L258.61 324.82 L259.12 325.10 M262.06 304.10 L262.06 329.20 M241.97 304.10 L241.97 329.20 M426.08 199.60 L426.56 199.90 L427.00 200.21 L427.40 200.54 L427.77 200.89 L428.08 201.25 L428.36 201.62 L428.59 202.00 L428.77 202.40 L428.90 202.79 L428.99 203.19 L429.02 203.60 L429.01 204.00 L428.95 204.41 L428.84 204.81 L428.68 205.20 L428.48 205.59 L428.23 205.97 L427.93 206.33 L427.59 206.69 L427.21 207.03 L426.79 207.35 L426.33 207.65 L425.83 207.94 L425.30 208.21 L424.74 208.45 L424.15 208.67 L423.54 208.87 L422.91 209.04 L422.25 209.18 L421.58 209.30 L420.90 209.39 L420.21 209.46 L419.51 209.49 L418.81 209.50 L418.11 209.48 L417.41 209.43 L416.72 209.35 L416.05 209.24 L415.38 209.11 L414.74 208.96 L414.11 208.77 L413.51 208.56 L412.94 208.33 L412.39 208.08 L411.88 207.80 L411.40 207.50 L410.96 207.19 L410.56 206.86 L410.20 206.51 L409.88 206.15 L409.61 205.78 L409.38 205.40 L409.20 205.00 L409.06 204.61 L408.98 204.21 L408.94 203.80 L408.95 203.40 L409.01 202.99 L409.12 202.59 L409.28 202.20 L409.49 201.81 L409.74 201.43 L410.03 201.07 L410.37 200.71 L410.76 200.37 L411.18 200.05 L411.64 199.75 L412.13 199.46 L412.66 199.19 L413.22 198.95 L413.81 198.73 L414.42 198.53 L415.06 198.36 L415.71 198.22 L416.38 198.10 L417.07 198.01 L417.76 197.94 L418.46 197.91 L419.16 197.90 L419.86 197.92 L420.55 197.97 L421.24 198.05 L421.92 198.16 L422.58 198.29 L423.23 198.44 L423.85 198.63 L424.45 198.84 L425.03 199.07 L425.57 199.32 L426.08 199.60 M426.08 224.70 L426.56 225.00 L427.00 225.31 L427.40 225.64 L427.77 225.99 L428.08 226.35 L428.36 226.72 L428.59 227.10 L428.77 227.50 L428.90 227.89 L428.99 228.29 L429.02 228.70 L429.01 229.10 L428.95 229.51 L428.84 229.91 L428.68 230.30 L428.48 230.69 L428.23 231.07 L427.93 231.43 L427.59 231.79 L427.21 232.13 L426.79 232.45 L426.33 232.75 L425.83 233.04 L425.30 233.31 L424.74 233.55 L424.15 233.77 L423.54 233.97 L422.91 234.14 L422.25 234.28 L421.58 234.40 L420.90 234.49 L420.21 234.56 L419.51 234.59 L418.81 234.60 L418.11 234.58 L417.41 234.53 L416.72 234.45 L416.05 234.34 L415.38 234.21 L414.74 234.06 L414.11 233.87 L413.51 233.66 L412.94 233.43 L412.39 233.18 L411.88 232.90 L411.40 232.60 L410.96 232.29 L410.56 231.96 L410.20 231.61 L409.88 231.25 L409.61 230.88 L409.38 230.50 L409.20 230.10 L409.06 229.71 L408.98 229.31 L408.94 228.90 L408.95 228.50 L409.01 228.09 L409.12 227.69 L409.28 227.30 L409.49 226.91 L409.74 226.53 L410.03 226.17 L410.37 225.81 L410.76 225.47 L411.18 225.15 L411.64 224.85 L412.13 224.56 L412.66 224.29 L413.22 224.05 L413.81 223.83 L414.42 223.63 L415.06 223.46 L415.71 223.32 L416.38 223.20 L417.07 223.11 L417.76 223.04 L418.46 223.01 L419.16 223.00 L419.86 223.02 L420.55 223.07 L421.24 223.15 L421.92 223.26 L422.58 223.39 L423.23 223.54 L423.85 223.73 L424.45 223.94 L425.03 224.17 L425.57 224.42 L426.08 224.70 M429.03 203.70 L429.03 228.80 M408.94 203.70 L408.94 228.80" fill="none" stroke="#c028c0" stroke-opacity="1" stroke-width="1.05"/>
<g stroke="#d0d0d0" stroke-width="0.9" fill="none"><path d="M76.3 395.9V362M76.3 395.9L101 381M76.3 395.9L52 381"/><path d="M72.3 395.9L76.3 393.5L80.3 395.9L76.3 398.3Z"/><path d="M98.5 380.5l6-2.5-2.5 5.5zM54.5 380.5l-6-2.5 2.5 5.5z"/><path d="M73 349h6l-6 8h6M111.5 370.5l6 7.5M117.5 370.5l-6 7.5M37.5 370.5l3.4 4v3.5M44.3 370.5l-3.4 4"/></g>
<g stroke="#e0e0e0" stroke-width="1"><path d="M405 343.6L433.5 359.6M405 359.6L433.5 343.6"/><rect x="417.9" y="350" width="3" height="3" fill="none"/></g>
</svg>
<div style="left:0;top:59px;width:31px;height:355px;background:#ece9d8"></div>
<div style="left:14px;top:59px;width:1px;height:229px;background:#d0ccb8"></div>
<div class="gripv" style="left:2px;top:61px;width:10px"></div>
<div class="gripv" style="left:17px;top:61px;width:11px"></div>
<svg style="left:2px;top:68px" width="10" height="10" viewBox="0 0 10 10"><path d="M1 9L9 1" stroke="#2a2a2a" stroke-width="1.4"/></svg>
<svg style="left:2px;top:81px" width="10" height="10" viewBox="0 0 10 10"><path d="M0.5 9.5L9.5 0.5" stroke="#2a2a2a" stroke-width="1.4"/><circle cx="5" cy="5" r="0.9" fill="#fff"/></svg>
<svg style="left:2px;top:94px" width="10" height="10" viewBox="0 0 10 10"><path d="M2 3v6h4c2 0 2-4 0-4h-1V1" stroke="#2a2a2a" stroke-width="1.2" fill="none"/></svg>
<svg style="left:2px;top:106px" width="10" height="10" viewBox="0 0 10 10"><path d="M5 0.8l4.2 3-1.6 5h-5.2l-1.6-5z" fill="#a8c8e8" stroke="#234"/></svg>
<svg style="left:2px;top:118px" width="10" height="10" viewBox="0 0 10 10"><rect x="0.8" y="2.5" width="8.4" height="5" fill="#b8d0ec" stroke="#234"/></svg>
<svg style="left:2px;top:131px" width="10" height="10" viewBox="0 0 10 10"><path d="M1 9c0-4 3-7 8-8" stroke="#2a2a2a" stroke-width="1.3" fill="none"/></svg>
<svg style="left:2px;top:143px" width="10" height="10" viewBox="0 0 10 10"><circle cx="5" cy="5" r="4" fill="#a0c0e8" stroke="#234" stroke-width="1.1"/><path d="M3 7l4-4" stroke="#234"/></svg>
<svg style="left:2px;top:156px" width="10" height="10" viewBox="0 0 10 10"><path d="M2 4a2 2 0 0 1 3-2a2 2 0 0 1 3 2a2 2 0 0 1 -1 4a2 2 0 0 1 -4 0a2 2 0 0 1 -1 -4z" fill="#d0e0f0" stroke="#345"/></svg>
<svg style="left:2px;top:168px" width="10" height="10" viewBox="0 0 10 10"><path d="M1 9c2-7 3 2 5-3s3-5 3-5" stroke="#2a2a2a" stroke-width="1.2" fill="none"/></svg>
<svg style="left:2px;top:182px" width="10" height="10" viewBox="0 0 10 10"><ellipse cx="5" cy="5" rx="4.3" ry="2.8" fill="#fff" stroke="#1a3a70" stroke-width="1.4"/></svg>
<svg style="left:2px;top:194px" width="10" height="10" viewBox="0 0 10 10"><path d="M9 5a4.3 3 0 1 0 -3 3" stroke="#1a3a70" stroke-width="1.4" fill="none"/></svg>
<svg style="left:2px;top:207px" width="10" height="10" viewBox="0 0 10 10"><rect x="1" y="1" width="6" height="5" fill="#d8e8f8" stroke="#345"/><rect x="3.5" y="4.5" width="5" height="5" fill="#c8d8e8" stroke="#234"/></svg>
<svg style="left:2px;top:219px" width="10" height="10" viewBox="0 0 10 10"><rect x="0.5" y="0.5" width="5" height="5" fill="#d8e8f8" stroke="#345"/><rect x="3.5" y="3.5" width="6" height="6" fill="#e8e8e8" stroke="#234"/></svg>
<svg style="left:2px;top:232px" width="10" height="10" viewBox="0 0 10 10"><circle cx="5" cy="5" r="0.9" fill="#222"/></svg>
<svg style="left:2px;top:244px" width="10" height="10" viewBox="0 0 10 10"><rect x="1" y="1" width="8" height="8" fill="#7aa4d8" stroke="#2a5090"/><path d="M1 4h8M1 6.5h8M4 1v8M6.5 1v8" stroke="#dfe8f8" stroke-width="0.8"/></svg>
<svg style="left:2px;top:257px" width="10" height="10" viewBox="0 0 10 10"><path d="M0.5 3l3-2.5h4l2.5 2.5v6.5h-9.5z" fill="#8ab4e0" stroke="#2a5090"/><ellipse cx="5" cy="6" rx="2.5" ry="1.8" fill="#d8e8f8" stroke="#2a5090"/></svg>
<svg style="left:2px;top:270px" width="10" height="10" viewBox="0 0 10 10"><text x="1" y="9.5" font-size="11" font-family="Liberation Sans" fill="#111">A</text></svg>
<svg style="left:18px;top:67px" width="10" height="10" viewBox="0 0 10 10"><path d="M1 1v9M9 1v9M1 3h8" stroke="#2a2a2a" stroke-width="1.3"/></svg>
<svg style="left:18px;top:80px" width="10" height="10" viewBox="0 0 10 10"><path d="M0.5 2l2 2M9.5 8l-2-2M1.5 5l5 4" stroke="#2a2a2a" stroke-width="1.3"/><path d="M2 3l6 5" stroke="#2a2a2a" stroke-width="1.3"/></svg>
<svg style="left:18px;top:93px" width="10" height="10" viewBox="0 0 10 10"><path d="M1 9h8M5 1v8M2 5h6M3 2h4" stroke="#2a2a2a" stroke-width="0.9"/></svg>
<svg style="left:18px;top:109px" width="10" height="10" viewBox="0 0 10 10"><circle cx="5" cy="5" r="4" fill="none" stroke="#2a2a2a" stroke-width="1.1"/><path d="M5 5l3-3" stroke="#2a2a2a" stroke-width="1.3"/></svg>
<svg style="left:18px;top:121px" width="10" height="10" viewBox="0 0 10 10"><circle cx="5" cy="5" r="4" fill="none" stroke="#2a2a2a" stroke-width="1.1"/><path d="M2 8l6-6" stroke="#2a2a2a" stroke-width="1.3"/></svg>
<svg style="left:18px;top:134px" width="10" height="10" viewBox="0 0 10 10"><path d="M1 9h8M1 9l6-8" stroke="#2a2a2a" stroke-width="1.2"/><path d="M5 9c0-2-1-3-2-3.5" stroke="#2a2a2a" fill="none"/></svg>
<svg style="left:18px;top:148px" width="10" height="10" viewBox="0 0 10 10"><path d="M1 9l8-8" stroke="#333" stroke-width="1.2"/><path d="M2 9V3l6 6z" fill="#a8c030" stroke="#506010"/><path d="M5 1h4v4" stroke="#222" fill="none"/></svg>
<svg style="left:18px;top:162px" width="10" height="10" viewBox="0 0 10 10"><path d="M1 1v9M5 3v7M9 5v5M1 2h8M1 5h4" stroke="#2a2a2a" stroke-width="1.1"/></svg>
<svg style="left:18px;top:175px" width="10" height="10" viewBox="0 0 10 10"><path d="M1 1v9M5 1v9M9 1v9M1 3h8" stroke="#2a2a2a" stroke-width="1.1"/></svg>
<svg style="left:18px;top:191px" width="10" height="10" viewBox="0 0 10 10"><path d="M1 9l4-4h4" stroke="#2a2a2a" stroke-width="1.2"/><path d="M4 1c2 1 4 3 5 4l-3 1z" fill="#d8c040" stroke="#333"/><path d="M0 5l3 2" stroke="#3a6ab0"/></svg>
<svg style="left:18px;top:205px" width="10" height="10" viewBox="0 0 10 10"><rect x="0.5" y="1.5" width="9" height="7" fill="#7aa4d8" stroke="#2a5090"/><path d="M4 1.5v7M0.5 5h9" stroke="#fff"/></svg>
<svg style="left:18px;top:216px" width="10" height="10" viewBox="0 0 10 10"><circle cx="5" cy="5" r="4.2" fill="#fff" stroke="#2a2a2a" stroke-width="1.1"/><path d="M5 3v4M3 5h4" stroke="#2a2a2a"/></svg>
<svg style="left:18px;top:233px" width="10" height="10" viewBox="0 0 10 10"><text x="1.5" y="6.5" font-size="7" font-family="Liberation Sans" fill="#111">A</text><path d="M1 8h8M1 7v3M9 7v3" stroke="#2a2a2a" stroke-width="1.2"/></svg>
<svg style="left:18px;top:245px" width="10" height="10" viewBox="0 0 10 10"><path d="M2 8l6-7" stroke="#d8b020" stroke-width="1.8"/><path d="M1 9h8M1 7v3M9 7v3" stroke="#2a2a2a" stroke-width="1.2"/></svg>
<svg style="left:18px;top:258px" width="10" height="10" viewBox="0 0 10 10"><path d="M1 1v9M9 1v9M1 3h8" stroke="#222" stroke-width="1.3"/><rect x="2" y="4" width="6" height="4" fill="#7aa4d8"/></svg>
<svg style="left:18px;top:273px" width="10" height="10" viewBox="0 0 10 10"><path d="M1 9h8M1 8v2M9 8v2" stroke="#2a2a2a" stroke-width="1.3"/><path d="M2 8l7-7" stroke="#555" stroke-width="1.2"/><path d="M4 8l1-3 2 3" fill="#333"/></svg>
<div class="sepv" style="left:17px;top:104px;width:11px"></div>
<div class="sepv" style="left:17px;top:145px;width:11px"></div>
<div class="sepv" style="left:17px;top:187px;width:11px"></div>
<div class="sepv" style="left:17px;top:229px;width:11px"></div>
<div style="left:0;top:284px;width:14px;height:1px;background:#d0ccb8"></div>
<div style="left:15px;top:287px;width:15px;height:1px;background:#d0ccb8"></div>
<div style="left:639px;top:59px;width:10px;height:346px;background:#f6f5ee"></div>
<div class="ddb" style="left:640px;top:60px;width:8px;height:9px"></div>
<svg style="left:640px;top:60px" width="8" height="9"><path d="M2 5.5l2-2 2 2" stroke="#1a4aa0" stroke-width="1.4" fill="none"/></svg>
<div class="ddb" style="left:640px;top:297px;width:8px;height:12px"></div>
<div class="ddb" style="left:640px;top:395px;width:8px;height:9px"></div>
<svg style="left:640px;top:395px" width="8" height="9"><path d="M2 3.5l2 2 2-2" stroke="#1a4aa0" stroke-width="1.4" fill="none"/></svg>
<div style="left:649px;top:59px;width:16px;height:355px;background:#ece9d8"></div>
<div class="gripv" style="left:652px;top:61px;width:11px"></div>
<svg style="left:652px;top:66px" width="10" height="10" viewBox="0 0 10 10"><path d="M1 9l2-3 6-6 1 2-6 6z" fill="#e8e0a0" stroke="#555"/><path d="M1 9l2-3 1 1.5z" fill="#c06060"/></svg>
<svg style="left:652px;top:79px" width="10" height="10" viewBox="0 0 10 10"><circle cx="3" cy="3" r="2.2" fill="none" stroke="#222" stroke-width="1.3"/><circle cx="7" cy="7" r="2.2" fill="none" stroke="#222" stroke-width="1.3"/><circle cx="7" cy="3" r="1.5" fill="none" stroke="#222"/></svg>
<svg style="left:652px;top:91px" width="10" height="10" viewBox="0 0 10 10"><path d="M5 0v10" stroke="#222" stroke-dasharray="1 1"/><path d="M4 2v7h-4z" fill="#a8b8c8" stroke="#333"/><path d="M6 2v7h4z" fill="#556" stroke="#333"/></svg>
<svg style="left:652px;top:104px" width="10" height="10" viewBox="0 0 10 10"><path d="M1 9h8L5 2z" fill="#c8d4e0" stroke="#333"/><path d="M3 7h4L5 4z" fill="#fff" stroke="#3a6ab0"/></svg>
<svg style="left:652px;top:117px" width="10" height="10" viewBox="0 0 10 10"><rect x="0.5" y="0.5" width="3.5" height="3.5" fill="none" stroke="#222"/><rect x="6" y="0.5" width="3.5" height="3.5" fill="none" stroke="#222"/><rect x="0.5" y="6" width="3.5" height="3.5" fill="none" stroke="#222"/><rect x="6" y="6" width="3.5" height="3.5" fill="none" stroke="#222"/></svg>
<svg style="left:652px;top:129px" width="10" height="10" viewBox="0 0 10 10"><path d="M5 0v10M0 5h10" stroke="#1a3a80" stroke-width="1.5"/><path d="M3 2l2-2 2 2M3 8l2 2 2-2M2 3l-2 2 2 2M8 3l2 2-2 2" fill="#1a3a80"/></svg>
<svg style="left:652px;top:142px" width="10" height="10" viewBox="0 0 10 10"><path d="M8 3a4 4 0 1 1 -5 -1.5" stroke="#222" stroke-width="1.4" fill="none"/><path d="M1 0l3 1.5-2 2z" fill="#222"/></svg>
<svg style="left:652px;top:154px" width="10" height="10" viewBox="0 0 10 10"><rect x="0.5" y="0.5" width="9" height="9" fill="none" stroke="#333"/><rect x="2.5" y="3.5" width="5" height="5" fill="#7aa4d8" stroke="#234"/></svg>
<svg style="left:652px;top:167px" width="10" height="10" viewBox="0 0 10 10"><path d="M1 1v8h8z" fill="#dde" stroke="#333"/><path d="M3 1l6 8" stroke="#3a6ab0"/></svg>
<svg style="left:652px;top:180px" width="10" height="10" viewBox="0 0 10 10"><path d="M1 6h8" stroke="#3a6ab0" stroke-width="1.3"/><path d="M3 9l4-8" stroke="#333" stroke-width="1.1"/></svg>
<svg style="left:652px;top:193px" width="10" height="10" viewBox="0 0 10 10"><path d="M1 6h5" stroke="#3a6ab0" stroke-width="1.3"/><path d="M9 1l-2 8" stroke="#333" stroke-width="1.1"/></svg>
<svg style="left:652px;top:205px" width="10" height="10" viewBox="0 0 10 10"><rect x="0.5" y="1.5" width="9" height="7" fill="none" stroke="#333"/></svg>
<svg style="left:652px;top:218px" width="10" height="10" viewBox="0 0 10 10"><path d="M0.5 9.5v-7l2-2h7" stroke="#333" stroke-width="1.2" fill="none"/></svg>
<svg style="left:652px;top:231px" width="10" height="10" viewBox="0 0 10 10"><path d="M1 10V5c0-3 2-4 5-4h4" stroke="#1a4a90" stroke-width="1.5" fill="none"/></svg>
<svg style="left:652px;top:244px" width="10" height="10" viewBox="0 0 10 10"><path d="M0.5 9.5v-7l2-2h7" stroke="#333" stroke-width="1.2" fill="none"/></svg>
<svg style="left:652px;top:258px" width="10" height="10" viewBox="0 0 10 10"><path d="M2 2l6 6M8 2l-6 6" stroke="#c04020" stroke-width="1.4"/><circle cx="5" cy="5" r="2" fill="#e8a040"/></svg>
<div class="gripv" style="left:652px;top:273px;width:11px"></div>
<svg style="left:652px;top:280px" width="10" height="10" viewBox="0 0 10 10"><rect x="0.5" y="0.5" width="9" height="9" fill="#fff" stroke="#333"/><path d="M2 9l3-7 3 7z" fill="none" stroke="#222"/></svg>
<svg style="left:652px;top:292px" width="10" height="10" viewBox="0 0 10 10"><rect x="0.5" y="0.5" width="5" height="5" fill="#fff" stroke="#333"/><circle cx="6.5" cy="6.5" r="3" fill="#fff" stroke="#333"/></svg>
<svg style="left:652px;top:305px" width="10" height="10" viewBox="0 0 10 10"><path d="M5 0.5l4.5 2.5v5l-4.5 2.5-4.5-2.5v-5z" fill="#fff" stroke="#333"/><path d="M0.5 3l4.5 2.5 4.5-2.5M5 5.5v5" stroke="#333" fill="none"/></svg>
<svg style="left:652px;top:318px" width="10" height="10" viewBox="0 0 10 10"><path d="M5 0.5l4.5 2.5v5l-4.5 2.5-4.5-2.5v-5z" fill="#3a78c8" stroke="#1a4a90"/><path d="M0.5 3l4.5 2.5 4.5-2.5" stroke="#aed0f0" fill="none"/></svg>
<svg style="left:652px;top:330px" width="10" height="10" viewBox="0 0 10 10"><circle cx="5" cy="5" r="4.5" fill="#3a70b8" stroke="#1a3a70"/><circle cx="3.5" cy="3.5" r="1.8" fill="#a8d0f8"/></svg>
<svg style="left:652px;top:343px" width="10" height="10" viewBox="0 0 10 10"><path d="M5 0.5l4.5 2.5v5l-4.5 2.5-4.5-2.5v-5z" fill="#3a6ab0" stroke="#1a3a70"/><circle cx="5" cy="5" r="2.3" fill="#8ab8e8"/></svg>
<svg style="left:652px;top:356px" width="10" height="10" viewBox="0 0 10 10"><circle cx="5" cy="5" r="4.5" fill="#3a70b8" stroke="#1a3a70"/><circle cx="3.5" cy="3.5" r="1.8" fill="#a8d0f8"/></svg>
<div style="left:650px;top:370px;width:15px;height:1px;background:#d0ccb8"></div>
<div style="left:31px;top:405px;width:402px;height:9px;background:#ece9d8"></div>
<svg style="left:31px;top:405px" width="44" height="9"><rect x="0" y="0" width="43" height="9" fill="#ece9d8"/><rect x="0.5" y="0.5" width="10" height="8" fill="#f4f2ea" stroke="#c8c4b0"/><rect x="10.5" y="0.5" width="10" height="8" fill="#f4f2ea" stroke="#c8c4b0"/><rect x="20.5" y="0.5" width="10" height="8" fill="#f4f2ea" stroke="#c8c4b0"/><rect x="30.5" y="0.5" width="11" height="8" fill="#f4f2ea" stroke="#c8c4b0"/><path d="M4 2v5M8 2l-3 2.5 3 2.5z M17 2l-3 2.5 3 2.5z M24 2l3 2.5-3 2.5z M33 2l3 2.5-3 2.5zM37.5 2v5" fill="#111" stroke="#111" stroke-width="1"/></svg>
<svg style="left:72px;top:404px" width="80" height="10"><path d="M2 0.5h24l-3 9h-18z" fill="#000" stroke="#555"/><path d="M26 1h24l-3 8.5h-18z" fill="#f4f2ea" stroke="#444"/><path d="M51 1h26l-3 8.5h-20z" fill="#f4f2ea" stroke="#444"/></svg>
<svg style="left:0;top:0" width="665" height="499"><path d="M79.93 406.98H84.47M79.93 406.98V412.20M84.47 406.98V412.20M79.93 412.02H84.47M80.85 408.90H83.55M80.85 410.40H83.55M82.20 407.70V411.30M86.55 406.80V412.20M85.90 408.90H87.63M85.90 410.70H87.52M88.17 406.98H91.19M88.17 408.66H91.19M88.17 410.34H91.19M88.17 412.02H91.19M88.87 406.98V412.20" stroke="#fff" stroke-width="0.8" fill="none" stroke-opacity="1.0"/></svg>
<svg style="left:0;top:0" width="665" height="499"><path d="M104.75 407.22H109.25M107.00 406.50V409.20M105.25 409.20H108.75M105.50 409.50V412.20M108.50 409.50V412.20M105.50 410.70H108.50M104.75 412.20H109.25M111.10 406.80V412.20M110.50 408.90H112.10M110.50 410.70H112.00M112.60 406.98H115.40M112.60 408.66H115.40M112.60 410.34H115.40M112.60 412.02H115.40M113.25 406.98V412.20M115.25 406.98V411.90" stroke="#333" stroke-width="0.6" fill="none" stroke-opacity="1.0"/></svg><div class="t" style="left:116.00px;top:406.73px;font-size:6.90px;color:#333;font-family:'Liberation Mono',monospace;transform:scaleX(0.725);transform-origin:0 0;opacity:1.0">1</div>
<svg style="left:0;top:0" width="665" height="499"><path d="M130.75 407.22H135.25M133.00 406.50V409.20M131.25 409.20H134.75M131.50 409.50V412.20M134.50 409.50V412.20M131.50 410.70H134.50M130.75 412.20H135.25M137.10 406.80V412.20M136.50 408.90H138.10M136.50 410.70H138.00M138.60 406.98H141.40M138.60 408.66H141.40M138.60 410.34H141.40M138.60 412.02H141.40M139.25 406.98V412.20M141.25 406.98V411.90" stroke="#333" stroke-width="0.6" fill="none" stroke-opacity="1.0"/></svg><div class="t" style="left:142.00px;top:406.73px;font-size:6.90px;color:#333;font-family:'Liberation Mono',monospace;transform:scaleX(0.725);transform-origin:0 0;opacity:1.0">2</div>
<div style="left:433px;top:405px;width:206px;height:9px;background:#f6f5ee"></div>
<div class="ddb" style="left:433px;top:405px;width:9px;height:8px"></div>
<svg style="left:433px;top:405px" width="9" height="8"><path d="M5.5 2l-2 2 2 2" stroke="#1a4aa0" stroke-width="1.4" fill="none"/></svg>
<div class="ddb" style="left:532px;top:405px;width:11px;height:8px"></div>
<div class="ddb" style="left:630px;top:405px;width:9px;height:8px"></div>
<svg style="left:630px;top:405px" width="9" height="8"><path d="M3.5 2l2 2-2 2" stroke="#1a4aa0" stroke-width="1.4" fill="none"/></svg>
<div style="left:0;top:414px;width:665px;height:17px;background:#ece9d8"></div>
<div class="grip" style="left:4px;top:417px;height:12px"></div>
<svg style="left:8px;top:418px" width="10" height="10" viewBox="0 0 10 10"><path d="M0 5h6" stroke="#333" stroke-width="1.5"/><circle cx="8" cy="5" r="1.8" fill="#dde" stroke="#3a6ab0"/></svg>
<svg style="left:22px;top:418px" width="10" height="10" viewBox="0 0 10 10"><path d="M2 10V2h4" stroke="#333" stroke-width="1.3" fill="none"/><circle cx="8" cy="2" r="1.8" fill="#dde" stroke="#3a6ab0"/><circle cx="2" cy="9" r="1" fill="#333"/></svg>
<svg style="left:40px;top:418px" width="10" height="10" viewBox="0 0 10 10"><path d="M2 8l6-6" stroke="#333" stroke-width="1.3"/><circle cx="8" cy="2" r="1.7" fill="#fff" stroke="#3a6ab0"/><circle cx="2" cy="8" r="1.7" fill="#fff" stroke="#3a6ab0"/></svg>
<svg style="left:52px;top:418px" width="10" height="10" viewBox="0 0 10 10"><path d="M1 9l8-8" stroke="#333" stroke-width="1.3"/><circle cx="5" cy="5" r="1.2" fill="#3a6ab0"/></svg>
<svg style="left:66px;top:418px" width="10" height="10" viewBox="0 0 10 10"><path d="M1 1l8 8M9 1l-8 8" stroke="#333" stroke-width="1.3"/></svg>
<svg style="left:79px;top:418px" width="10" height="10" viewBox="0 0 10 10"><path d="M1 1l8 8M9 1l-8 8" stroke="#333" stroke-width="1.3"/></svg>
<svg style="left:92px;top:418px" width="10" height="10" viewBox="0 0 10 10"><path d="M1 5h8" stroke="#556" stroke-width="1.5"/></svg>
<svg style="left:109px;top:418px" width="10" height="10" viewBox="0 0 10 10"><circle cx="5" cy="5" r="4.2" fill="#dde8f8" stroke="#3a5a90" stroke-width="1.2"/><circle cx="5" cy="5" r="1.3" fill="#3a5a90"/></svg>
<svg style="left:122px;top:418px" width="10" height="10" viewBox="0 0 10 10"><circle cx="5" cy="5" r="4" fill="none" stroke="#3a5a90" stroke-width="1.2"/><path d="M5 0l2 2-2 2-2-2zM5 6l2 2-2 2-2-2zM0 5l2-2 2 2-2 2zM6 5l2-2 2 2-2 2z" fill="#3a6ab0"/></svg>
<svg style="left:135px;top:418px" width="10" height="10" viewBox="0 0 10 10"><circle cx="5" cy="5" r="4" fill="none" stroke="#3a5a90" stroke-width="1.4"/></svg>
<svg style="left:152px;top:418px" width="10" height="10" viewBox="0 0 10 10"><path d="M5 1v6M1 9h8" stroke="#333" stroke-width="1.2"/><path d="M3 9l2-2 2 2" stroke="#333" fill="none"/></svg>
<svg style="left:165px;top:418px" width="10" height="10" viewBox="0 0 10 10"><path d="M1 8l6-6M3 9l6-6" stroke="#333" stroke-width="1.3"/></svg>
<svg style="left:179px;top:418px" width="10" height="10" viewBox="0 0 10 10"><rect x="1" y="1" width="5" height="5" fill="none" stroke="#555"/><rect x="4" y="4" width="5" height="5" fill="#dfe" stroke="#555"/></svg>
<svg style="left:194px;top:418px" width="10" height="10" viewBox="0 0 10 10"><circle cx="5" cy="5" r="1.2" fill="#bbb"/></svg>
<svg style="left:209px;top:418px" width="10" height="10" viewBox="0 0 10 10"><path d="M1 9l8-5" stroke="#333" stroke-width="1.2"/><path d="M5 2l2 3-3 1z" fill="#555"/></svg>
<svg style="left:223px;top:418px" width="10" height="10" viewBox="0 0 10 10"><path d="M2 9l6-7" stroke="#c04040" stroke-width="1.5"/><circle cx="7" cy="8" r="1.2" fill="#888"/></svg>
<svg style="left:238px;top:418px" width="10" height="10" viewBox="0 0 10 10"><path d="M2 9V3c0-2 5-2 5 0v6" stroke="#c02020" stroke-width="1.7" fill="none"/><circle cx="8.5" cy="9" r="1" fill="#555"/></svg>
<svg style="left:262px;top:418px" width="10" height="10" viewBox="0 0 10 10"><rect x="0.5" y="0.5" width="9" height="9" fill="#dfe8f4" stroke="#2a4a80"/><path d="M2 4h6v4h-6z" fill="#3a6ab0"/><circle cx="5" cy="6" r="1.5" fill="#fff"/></svg>
<svg style="left:280px;top:418px" width="10" height="10" viewBox="0 0 10 10"><path d="M0.5 3l3-2.5h6v6.5l-3 2.5h-6z" fill="#5a88c8" stroke="#2a4a80"/><path d="M0.5 3h6v6.5M6.5 3l3-2.5" stroke="#dde8f8" fill="none"/></svg>
<svg style="left:293px;top:418px" width="10" height="10" viewBox="0 0 10 10"><path d="M0.5 3l3-2.5h6v6.5l-3 2.5h-6z" fill="#4a7ac0" stroke="#2a4a80"/><path d="M1 6h5" stroke="#fff"/></svg>
<svg style="left:305px;top:418px" width="10" height="10" viewBox="0 0 10 10"><path d="M0.5 3l3-2.5h6v6.5l-3 2.5h-6z" fill="#e0e8f4" stroke="#2a4a80"/><path d="M0.5 3h6v6.5M6.5 3l3-2.5" stroke="#2a4a80" fill="none"/><rect x="1" y="3.5" width="5" height="5.5" fill="#3a6ab0"/></svg>
<svg style="left:318px;top:418px" width="10" height="10" viewBox="0 0 10 10"><path d="M0.5 3l3-2.5h6v6.5l-3 2.5h-6z" fill="#e0e8f4" stroke="#2a4a80"/><path d="M0.5 3h6v6.5M6.5 3l3-2.5" stroke="#2a4a80" fill="none"/><rect x="1" y="3.5" width="5" height="5.5" fill="#3a6ab0"/></svg>
<svg style="left:332px;top:418px" width="10" height="10" viewBox="0 0 10 10"><path d="M0.5 3l3-2.5h6v6.5l-3 2.5h-6z" fill="#3a68b0" stroke="#1a3a80"/></svg>
<svg style="left:345px;top:418px" width="10" height="10" viewBox="0 0 10 10"><path d="M3 0.5h6.5v6.5h-6.5z" fill="#2a5aa0" stroke="#1a3a80"/><path d="M0.5 3h6v6.5h-6z" fill="#c8d8f0" stroke="#2a4a80"/></svg>
<svg style="left:363px;top:418px" width="10" height="10" viewBox="0 0 10 10"><path d="M5 0.5l4.5 4.5-4.5 4.5-4.5-4.5z" fill="#2a5aa0" stroke="#1a3a70"/><path d="M5 0.5l4.5 4.5-4.5 0z" fill="#a8c8f0"/></svg>
<svg style="left:375px;top:418px" width="10" height="10" viewBox="0 0 10 10"><path d="M5 0.5l4.5 4.5-4.5 4.5-4.5-4.5z" fill="#8ab0d8" stroke="#1a3a70"/><path d="M0.5 5h9" stroke="#fff"/></svg>
<svg style="left:388px;top:418px" width="10" height="10" viewBox="0 0 10 10"><path d="M5 0.5l3.5 4.5-3.5 4.5-3.5-4.5z" fill="#6a90c0" stroke="#1a3a70"/></svg>
<svg style="left:400px;top:418px" width="10" height="10" viewBox="0 0 10 10"><path d="M5 0.5l3.5 4.5-3.5 4.5-3.5-4.5z" fill="#3a68b0" stroke="#1a3a70"/><path d="M5 0.5v9" stroke="#cde"/></svg>
<svg style="left:420px;top:418px" width="10" height="10" viewBox="0 0 10 10"><circle cx="3" cy="6" r="2.5" fill="#333"/><circle cx="7.5" cy="6" r="2.2" fill="#333"/><path d="M2 2h6" stroke="#444" stroke-width="1.5"/></svg>
<svg style="left:442px;top:418px" width="10" height="10" viewBox="0 0 10 10"><ellipse cx="5" cy="5" rx="4.5" ry="3.5" fill="#dde" stroke="#456"/><circle cx="3.5" cy="5" r="2" fill="none" stroke="#345"/><circle cx="6.5" cy="5" r="2" fill="none" stroke="#345"/></svg>
<svg style="left:455px;top:418px" width="10" height="10" viewBox="0 0 10 10"><ellipse cx="5" cy="5" rx="4.5" ry="3.5" fill="#dde" stroke="#456"/><circle cx="3.5" cy="5" r="2" fill="none" stroke="#345"/><circle cx="6.5" cy="5" r="2" fill="none" stroke="#345"/></svg>
<svg style="left:468px;top:418px" width="10" height="10" viewBox="0 0 10 10"><ellipse cx="5" cy="5" rx="4.5" ry="3.5" fill="#dde" stroke="#456"/><circle cx="3.5" cy="5" r="2" fill="none" stroke="#345"/><circle cx="6.5" cy="5" r="2" fill="none" stroke="#345"/></svg>
<svg style="left:485px;top:418px" width="10" height="10" viewBox="0 0 10 10"><path d="M0.5 3l3-2.5h6v6.5l-3 2.5h-6z" fill="#6a8ab0" stroke="#234"/><rect x="1" y="3.5" width="5" height="5" fill="#e8eef8"/></svg>
<svg style="left:498px;top:418px" width="10" height="10" viewBox="0 0 10 10"><path d="M1 9l3-3M4 6c0-3 2-5 5-5" stroke="#333" stroke-width="1.3" fill="none"/><rect x="5" y="4" width="4" height="4" fill="#3a6ab0"/></svg>
<svg style="left:511px;top:418px" width="10" height="10" viewBox="0 0 10 10"><rect x="0.5" y="2.5" width="7" height="7" fill="#4a7ac0" stroke="#234"/><rect x="3" y="0.5" width="6.5" height="6.5" fill="none" stroke="#234"/></svg>
<svg style="left:525px;top:418px" width="10" height="10" viewBox="0 0 10 10"><rect x="0.5" y="0.5" width="9" height="9" fill="#d8a8b8" stroke="#633"/><rect x="2.5" y="2.5" width="5" height="5" fill="#fff" stroke="#633"/></svg>
<svg style="left:538px;top:418px" width="10" height="10" viewBox="0 0 10 10"><circle cx="5" cy="5" r="4.3" fill="#4a8ac8" stroke="#234"/><path d="M2 4h6v3" stroke="#fff" fill="none"/></svg>
<svg style="left:551px;top:418px" width="10" height="10" viewBox="0 0 10 10"><path d="M1 4l4-3 4 4-4 4z" fill="#fff" stroke="#333"/><path d="M5 9c2-1 4-2 4-4" stroke="#333" fill="none"/></svg>
<svg style="left:565px;top:418px" width="10" height="10" viewBox="0 0 10 10"><rect x="0.5" y="3" width="6" height="6" fill="#3a78c8" stroke="#234"/><rect x="4" y="0.5" width="5.5" height="5.5" fill="#5a98d8" stroke="#234"/></svg>
<svg style="left:579px;top:418px" width="10" height="10" viewBox="0 0 10 10"><rect x="0.5" y="2" width="4.5" height="6" fill="#2a9a88" stroke="#234"/><rect x="5" y="2" width="4.5" height="6" fill="#2a5aa0" stroke="#234"/></svg>
<svg style="left:596px;top:418px" width="10" height="10" viewBox="0 0 10 10"><path d="M0.5 3l3-2.5h6v6.5l-3 2.5h-6z" fill="#5a88c8" stroke="#234"/><path d="M2 5h3v3" stroke="#fff" fill="none"/></svg>
<svg style="left:609px;top:418px" width="10" height="10" viewBox="0 0 10 10"><rect x="0.5" y="2" width="8" height="7" fill="#e8e8f0" stroke="#333"/><path d="M2 3l6 6" stroke="#c03030" stroke-width="1.4"/><circle cx="7" cy="3" r="2" fill="#c04040"/></svg>
<svg style="left:625px;top:418px" width="10" height="10" viewBox="0 0 10 10"><rect x="0.5" y="0.5" width="9" height="9" fill="#3a6ab0" stroke="#123"/><rect x="2" y="2" width="6" height="6" fill="#8ab8e0"/></svg>
<svg style="left:638px;top:418px" width="10" height="10" viewBox="0 0 10 10"><rect x="1" y="3" width="8" height="7" fill="#e8c040" stroke="#654"/><path d="M3 3V1h4v2" stroke="#654" fill="none"/></svg>
<svg style="left:651px;top:418px" width="10" height="10" viewBox="0 0 10 10"><rect x="0.5" y="2" width="4" height="6" fill="#3a6a90" stroke="#123"/><rect x="5.5" y="2" width="4" height="6" fill="#3a6a90" stroke="#123"/></svg>
<div class="sep" style="left:35px;top:417px;height:12px"></div>
<div class="sep" style="left:104px;top:417px;height:12px"></div>
<div class="sep" style="left:148px;top:417px;height:12px"></div>
<div class="sep" style="left:255px;top:417px;height:12px"></div>
<div class="sep" style="left:438px;top:417px;height:12px"></div>
<div class="sep" style="left:591px;top:417px;height:12px"></div>
<div class="sep" style="left:621px;top:417px;height:12px"></div>
<div style="left:0;top:431px;width:665px;height:1px;background:#aca899"></div>
<div style="left:0;top:432px;width:665px;height:1px;background:#fff"></div>
<div style="left:0;top:433px;width:665px;height:32px;background:#ece9d8"></div>
<div class="grip" style="left:3px;top:436px;height:27px"></div>
<div style="left:8px;top:437px;width:643px;height:28px;background:#fff;border-left:2px solid #444;border-top:1px solid #777"></div>
<div style="left:10px;top:454px;width:641px;height:1px;background:#b8b8b8"></div>
<svg style="left:0;top:0" width="665" height="499"><path d="M12.32 438.51V444.09M11.10 440.06H13.28M11.10 442.54H13.14M13.96 438.70H17.76M13.96 440.43H17.76M13.96 442.17H17.76M13.96 443.90H17.76M14.84 438.70V444.09M17.56 438.70V443.78M14.16 444.09L15.86 441.61M20.64 438.70H26.36M20.64 438.70V444.09M26.36 438.70V444.09M20.64 443.90H26.36M21.80 440.68H25.20M21.80 442.23H25.20M23.50 439.44V443.16M29.92 438.51V444.09M29.10 440.06H31.28M29.10 442.54H31.14M31.96 438.70H35.76M31.96 441.30H35.76M31.96 443.90H35.76M33.86 438.70V444.09M35.56 438.70V443.78M39.32 438.51V444.09M38.10 440.68H40.28M40.96 438.70H44.76M40.96 441.30H44.76M40.96 443.90H44.76M41.84 438.70V444.09M47.64 438.70H53.36M47.64 438.70V444.09M53.36 438.70V444.09M47.64 443.90H53.36M48.80 440.68H52.20M48.80 442.23H52.20M50.50 439.44V443.16M56.92 438.51V444.09M56.10 440.68H58.28M56.10 442.54H58.14M58.96 438.70H62.76M58.96 441.30H62.76M58.96 443.90H62.76M60.86 438.70V444.09M65.44 438.94H71.56M68.50 438.20V440.99M66.12 440.99H70.88M66.46 441.30V444.09M70.54 441.30V444.09M66.46 442.54H70.54M65.44 444.09H71.56M83.44 438.94H89.56M86.50 438.20V440.99M84.12 440.99H88.88M84.46 441.30V444.09M88.54 441.30V444.09M84.46 442.54H88.54M83.44 444.09H89.56M92.44 438.94H98.56M95.50 438.20V440.99M93.12 440.99H97.88M93.46 441.30V444.09M97.54 441.30V444.09M93.46 442.54H97.54M92.44 444.09H98.56" stroke="#000" stroke-width="1.05" fill="none" stroke-opacity="1.0"/></svg><div class="t" style="left:73.00px;top:437.73px;font-size:8.05px;color:#000;font-family:'Liberation Mono',monospace;transform:scaleX(0.932);transform-origin:0 0;opacity:1.0">&nbsp;[</div><div class="t" style="left:100.00px;top:437.73px;font-size:8.05px;color:#000;font-family:'Liberation Mono',monospace;transform:scaleX(0.932);transform-origin:0 0;opacity:1.0">(P)]:&nbsp;80</div>
<svg style="left:0;top:0" width="665" height="499"><path d="M12.32 445.81V451.39M11.10 447.36H13.28M11.10 449.84H13.14M13.96 446.00H17.76M13.96 447.73H17.76M13.96 449.47H17.76M13.96 451.20H17.76M14.84 446.00V451.39M17.56 446.00V451.08M14.16 451.39L15.86 448.91M20.64 446.00H26.36M20.64 446.00V451.39M26.36 446.00V451.39M20.64 451.20H26.36M21.80 447.98H25.20M21.80 449.53H25.20M23.50 446.74V450.46M29.92 445.81V451.39M29.10 447.36H31.28M29.10 449.84H31.14M31.96 446.00H35.76M31.96 448.60H35.76M31.96 451.20H35.76M33.86 446.00V451.39M35.56 446.00V451.08M39.32 445.81V451.39M38.10 447.98H40.28M40.96 446.00H44.76M40.96 448.60H44.76M40.96 451.20H44.76M41.84 446.00V451.39M47.92 445.81V451.39M47.10 447.98H49.28M49.96 446.00H53.76M49.96 448.60H53.76M49.96 451.20H53.76M51.86 446.00V451.39M50.16 451.39L51.86 448.91M56.92 445.81V451.39M56.10 447.36H58.28M58.96 446.00H62.76M58.96 448.60H62.76M58.96 451.20H62.76M59.84 446.00V451.39M62.56 446.00V451.08M66.32 445.81V451.39M65.10 447.36H67.28M65.10 449.84H67.14M67.96 446.00H71.76M67.96 448.60H71.76M67.96 451.20H71.76M68.84 446.00V451.39M71.56 446.00V451.08M74.64 446.00H80.36M74.64 446.00V451.39M80.36 446.00V451.39M74.64 451.20H80.36M75.80 447.98H79.20M75.80 449.53H79.20M77.50 446.74V450.46M83.92 445.81V451.39M83.10 447.98H85.28M83.10 449.84H85.14M85.96 446.00H89.76M85.96 448.60H89.76M85.96 451.20H89.76M87.86 446.00V451.39" stroke="#000" stroke-width="1.05" fill="none" stroke-opacity="1.0"/></svg><div class="t" style="left:91.00px;top:445.03px;font-size:8.05px;color:#000;font-family:'Liberation Mono',monospace;transform:scaleX(0.932);transform-origin:0 0;opacity:1.0">&nbsp;&lt;0&gt;:</div>
<svg style="left:0;top:0" width="665" height="499"><path d="M11.44 457.24H17.56M14.50 456.50V459.29M12.12 459.29H16.88M12.46 459.60V462.39M16.54 459.60V462.39M12.46 460.84H16.54M11.44 462.39H17.56M21.32 456.81V462.39M20.10 458.36H22.28M20.10 460.84H22.14M22.96 457.00H26.76M22.96 459.60H26.76M22.96 462.20H26.76M24.86 457.00V462.39M23.16 462.39L24.86 459.91" stroke="#000" stroke-width="1.05" fill="none" stroke-opacity="1.0"/></svg><div class="t" style="left:28.00px;top:456.03px;font-size:8.05px;color:#000;font-family:'Liberation Mono',monospace;transform:scaleX(0.932);transform-origin:0 0;opacity:1.0">:</div>
<div class="ddb" style="left:650px;top:438px;width:10px;height:8px"></div>
<svg style="left:650px;top:438px" width="10" height="8"><path d="M2.5 5l2.5-2.5 2.5 2.5" stroke="#1a4aa0" stroke-width="1.4" fill="none"/></svg>
<div class="ddb" style="left:650px;top:446px;width:10px;height:9px"></div>
<svg style="left:650px;top:446px" width="10" height="9"><path d="M2.5 3.5l2.5 2.5 2.5-2.5" stroke="#1a4aa0" stroke-width="1.4" fill="none"/></svg>
<div style="left:567px;top:454px;width:88px;height:10px;background:#eef2f8;border:1px solid #b8c8e0"></div>
<svg style="left:571px;top:455px" width="8" height="8"><path d="M4 0v6M1.5 3.5l2.5 3 2.5-3" stroke="#1a8a1a" stroke-width="1.3" fill="none"/></svg>
<div class="t" style="left:590.00px;top:455.30px;font-size:7.97px;color:#333;font-family:'Liberation Sans',sans-serif;transform:scaleX(0.797);transform-origin:0 0;">0KB/S</div>
<svg style="left:610px;top:455px" width="8" height="8"><path d="M4 8v-6M1.5 4.5l2.5-3 2.5 3" stroke="#d0c040" stroke-width="1.3" fill="none"/></svg>
<div class="t" style="left:633.00px;top:455.30px;font-size:7.97px;color:#333;font-family:'Liberation Sans',sans-serif;transform:scaleX(0.797);transform-origin:0 0;">0KB/S</div>
<div style="left:0;top:465px;width:665px;height:15px;background:#ece9d8"></div>
<div style="left:2px;top:467px;width:144px;height:12px;border-top:1px solid #c8c4b0;border-left:1px solid #c8c4b0"></div>
<div class="t" style="left:4.00px;top:469.80px;font-size:7.97px;color:#b8b4a4;font-family:'Liberation Sans',sans-serif;transform:scaleX(0.913);transform-origin:0 0;">142.7772,&nbsp;987.5738,&nbsp;0.0000</div>
<div style="left:165px;top:468px;width:1px;height:10px;background:#c8c4b0"></div>
<svg style="left:0;top:0" width="665" height="499"><path d="M152.21 469.85V476.15M151.00 472.30H152.76M153.31 470.06H156.39M153.31 473.00H156.39M153.31 475.94H156.39M154.85 470.06V476.15M156.22 470.06V475.80M153.47 476.15L154.85 473.35M157.78 470.34H162.72M160.25 469.50V472.65M158.32 472.65H162.18M158.60 473.00V476.15M161.90 473.00V476.15M158.60 474.40H161.90M157.78 476.15H162.72" stroke="#111" stroke-width="0.75" fill="none" stroke-opacity="1.0"/></svg>
<div style="left:185px;top:468px;width:1px;height:10px;background:#c8c4b0"></div>
<svg style="left:0;top:0" width="665" height="499"><path d="M170.48 470.06H175.52M170.48 470.06V476.15M175.52 470.06V476.15M170.48 475.94H175.52M171.50 472.30H174.50M171.50 474.05H174.50M173.00 470.90V475.10M177.30 470.34H182.70M180.00 469.50V472.65M177.90 472.65H182.10M178.20 473.00V476.15M181.80 473.00V476.15M178.20 474.40H181.80M177.30 476.15H182.70" stroke="#111" stroke-width="0.75" fill="none" stroke-opacity="1.0"/></svg>
<div style="left:204px;top:468px;width:1px;height:10px;background:#c8c4b0"></div>
<svg style="left:0;top:0" width="665" height="499"><path d="M188.52 470.06H193.98M188.52 470.06V476.15M193.98 470.06V476.15M188.52 475.94H193.98M189.62 472.30H192.88M189.62 474.05H192.88M191.25 470.90V475.10M196.67 469.85V476.15M195.50 472.30H197.58M198.23 470.06H201.87M198.23 473.00H201.87M198.23 475.94H201.87M200.05 470.06V476.15M201.68 470.06V475.80" stroke="#111" stroke-width="0.75" fill="none" stroke-opacity="1.0"/></svg>
<div style="left:205px;top:467px;width:17px;height:12px;background:#fbfaf6;border:1px solid #555;border-right-color:#fff;border-bottom-color:#fff"></div>
<svg style="left:0;top:0" width="665" height="499"><path d="M207.30 470.34H212.70M210.00 469.50V472.65M207.90 472.65H212.10M208.20 473.00V476.15M211.80 473.00V476.15M208.20 474.40H211.80M207.30 476.15H212.70M214.30 470.34H219.70M217.00 469.50V472.65M214.90 472.65H219.10M215.20 473.00V476.15M218.80 473.00V476.15M215.20 474.40H218.80M214.30 476.15H219.70" stroke="#111" stroke-width="0.75" fill="none" stroke-opacity="1.0"/></svg>
<div style="left:222px;top:467px;width:32px;height:12px;background:#fbfaf6;border:1px solid #555;border-right-color:#fff;border-bottom-color:#fff"></div>
<svg style="left:0;top:0" width="665" height="499"><path d="M224.75 469.85V476.15M224.00 472.30H226.00M224.00 474.40H225.88M226.62 470.06H230.12M226.62 472.02H230.12M226.62 473.98H230.12M226.62 475.94H230.12M227.44 470.06V476.15M231.56 470.34H237.19M234.38 469.50V472.65M232.19 472.65H236.56M232.50 473.00V476.15M236.25 473.00V476.15M232.50 474.40H236.25M231.56 476.15H237.19M239.88 469.85V476.15M238.50 472.30H240.50M241.12 470.06H244.62M241.12 473.00H244.62M241.12 475.94H244.62M242.88 470.06V476.15M244.44 470.06V475.80M241.31 476.15L242.88 473.35M246.06 470.34H251.69M248.88 469.50V472.65M246.69 472.65H251.06M247.00 473.00V476.15M250.75 473.00V476.15M247.00 474.40H250.75M246.06 476.15H251.69" stroke="#111" stroke-width="0.75" fill="none" stroke-opacity="1.0"/></svg>
<div style="left:255px;top:467px;width:33px;height:12px;background:#fbfaf6;border:1px solid #555;border-right-color:#fff;border-bottom-color:#fff"></div>
<svg style="left:0;top:0" width="665" height="499"><path d="M257.78 469.85V476.15M257.00 472.30H259.08M257.00 474.40H258.95M259.73 470.06H263.37M259.73 472.02H263.37M259.73 473.98H263.37M259.73 475.94H263.37M260.57 470.06V476.15M264.82 470.34H270.68M267.75 469.50V472.65M265.48 472.65H270.02M265.80 473.00V476.15M269.70 473.00V476.15M265.80 474.40H269.70M264.82 476.15H270.68M272.32 470.34H278.18M275.25 469.50V472.65M272.98 472.65H277.52M273.30 473.00V476.15M277.20 473.00V476.15M273.30 474.40H277.20M272.32 476.15H278.18M280.93 469.85V476.15M279.50 471.60H281.58M282.23 470.06H285.87M282.23 472.02H285.87M282.23 473.98H285.87M282.23 475.94H285.87M284.05 470.06V476.15M285.68 470.06V475.80" stroke="#111" stroke-width="0.75" fill="none" stroke-opacity="1.0"/></svg>
<div style="left:304px;top:468px;width:1px;height:10px;background:#c8c4b0"></div>
<svg style="left:0;top:0" width="665" height="499"><path d="M291.60 469.85V476.15M291.00 471.60H292.60M291.00 474.40H292.50M293.10 470.06H295.90M293.10 473.00H295.90M293.10 475.94H295.90M294.50 470.06V476.15M293.25 476.15L294.50 473.35M297.40 470.06H301.60M297.40 470.06V476.15M301.60 470.06V476.15M297.40 475.94H301.60M298.25 472.30H300.75M298.25 474.05H300.75M299.50 470.90V475.10" stroke="#111" stroke-width="0.75" fill="none" stroke-opacity="1.0"/></svg>
<div style="left:305px;top:467px;width:17px;height:12px;background:#fbfaf6;border:1px solid #555;border-right-color:#fff;border-bottom-color:#fff"></div>
<svg style="left:0;top:0" width="665" height="499"><path d="M307.48 470.06H312.52M307.48 470.06V476.15M312.52 470.06V476.15M307.48 475.94H312.52M308.50 472.30H311.50M308.50 474.05H311.50M310.00 470.90V475.10M314.72 469.85V476.15M314.00 472.30H315.92M314.00 474.40H315.80M316.52 470.06H319.88M316.52 472.02H319.88M316.52 473.98H319.88M316.52 475.94H319.88M317.30 470.06V476.15" stroke="#111" stroke-width="0.75" fill="none" stroke-opacity="1.0"/></svg>
<svg style="left:643px;top:467px" width="22" height="12"><rect x="0.5" y="0.5" width="11" height="11" fill="#e8e4f0"/><path d="M2 2l4 4M6 2l4 8" stroke="#4a4a90" stroke-width="1.3"/><circle cx="7" cy="8" r="2.5" fill="#e8d040"/><path d="M15 6h5l-2.5 3z" fill="#111"/></svg>
<div style="left:0;top:480px;width:665px;height:19px;background:linear-gradient(#c8d4f0 0,#8aa0e0 1px,#5a76cc 2.5px,#3e5cb4 5px,#2e4ca4 9px,#26449a 14px,#223e90 19px)"></div>
<div style="left:0;top:480px;width:57px;height:19px;background:linear-gradient(#48a848,#3a9a3a 40%,#2e8a2e);border-radius:0 8px 8px 0"></div>
<div class="t" style="left:19.50px;top:483.76px;font-size:11.59px;color:#fff;font-family:'Liberation Sans',sans-serif;font-weight:bold;font-style:italic;transform:scaleX(1.022);transform-origin:0 0;">Start</div>
<svg style="left:6px;top:484px" width="10" height="11"><path d="M0 1l4-1v5l-4 0z" fill="#e84020"/><path d="M5 0l5-0.5v5h-5z" fill="#40b040"/><path d="M0 6h4v5l-4-1z" fill="#2060e0"/><path d="M5 6h5v5l-5-0.5z" fill="#f0c020"/></svg>
<svg style="left:68px;top:484px" width="9" height="9" viewBox="0 0 10 10"><path d="M5 0.5l4.5 2.5v5l-4.5 2.5-4.5-2.5v-5z" fill="#3a78c8" stroke="#1a4a90"/><path d="M0.5 3l4.5 2.5 4.5-2.5" stroke="#aed0f0" fill="none"/></svg>
<div style="left:82px;top:485px;width:10px;height:8px;background:#e8eef8;border:1px solid #345;border-top:2px solid #345"></div>
<svg style="left:95px;top:484px" width="9" height="10"><rect x="0.5" y="0.5" width="8" height="9" fill="#1a7a50" stroke="#123"/><path d="M2 3l5 5M7 3l-5 5" stroke="#fff" stroke-width="1.2"/></svg>
<div class="t" style="left:110.00px;top:483.13px;font-size:5.80px;color:#dde;font-family:'Liberation Sans',sans-serif;">»</div>
<div style="left:125px;top:482px;width:90px;height:16px;background:linear-gradient(#4a68c0,#3a58ac 50%,#34509e);border-radius:2px;border:1px solid #2a4690"></div>
<svg style="left:132px;top:485px" width="10" height="10"><rect x="0.5" y="0.5" width="9" height="9" fill="#e0e8f8" stroke="#456"/><path d="M2 3h6M2 5h6M2 7h4" stroke="#2a5ab0"/></svg>
<svg style="left:0;top:0" width="665" height="499"><path d="M144.98 486.56H150.02M144.98 486.56V492.65M150.02 486.56V492.65M144.98 492.44H150.02M146.00 488.80H149.00M146.00 490.55H149.00M147.50 487.40V491.60M151.80 486.84H157.20M154.50 486.00V489.15M152.40 489.15H156.60M152.70 489.50V492.65M156.30 489.50V492.65M152.70 490.90H156.30M151.80 492.65H157.20" stroke="#fff" stroke-width="0.8" fill="none" stroke-opacity="1.0"/></svg>
<div class="t" style="left:158.00px;top:485.70px;font-size:8.70px;color:#fff;font-family:'Liberation Sans',sans-serif;transform:scaleX(0.824);transform-origin:0 0;">Microsoft&nbsp;Word&nbsp;...</div>
<div style="left:218px;top:482px;width:91px;height:16px;background:linear-gradient(#18306e,#1c3680 50%,#203c8c);border-radius:2px;border:1px solid #142a68"></div>
<div style="left:223px;top:485px;width:10px;height:10px;background:#c0e0f0;border:1px solid #4a90c0"></div>
<div style="left:225px;top:487px;width:6px;height:6px;background:#1a8ab8"></div>
<div class="t" style="left:236.00px;top:485.70px;font-size:8.70px;color:#fff;font-family:'Liberation Sans',sans-serif;transform:scaleX(0.783);transform-origin:0 0;">AutoCAD&nbsp;2004&nbsp;-&nbsp;[Dra...</div>
<div style="left:580px;top:480px;width:85px;height:19px;background:linear-gradient(#b8c8f0 0,#7890d8 1px,#3c60c0 3px,#2e52b0 10px,#2a4ca4);border-left:1px solid #203c90"></div>
<div style="left:586px;top:487px;width:10px;height:6px;background:#d8dce8;border:1px solid #333"></div>
<svg style="left:600px;top:486px" width="4" height="6"><path d="M4 0l-3 3 3 3z" fill="#fff"/></svg>
<svg style="left:608px;top:484px" width="30" height="12"><rect x="0" y="2" width="6" height="6" fill="#c8d8f0" stroke="#223"/><rect x="7" y="0" width="6" height="6" fill="#c8d8f0" stroke="#223"/><path d="M12 9l5-4" stroke="#bcd" stroke-width="1.3"/><ellipse cx="24" cy="6" rx="4.5" ry="3.5" fill="#f0a020" stroke="#a05010"/></svg>
<div class="t" style="left:640.00px;top:486.70px;font-size:8.70px;color:#fff;font-family:'Liberation Sans',sans-serif;transform:scaleX(0.781);transform-origin:0 0;">13:50</div>
</body></html>
